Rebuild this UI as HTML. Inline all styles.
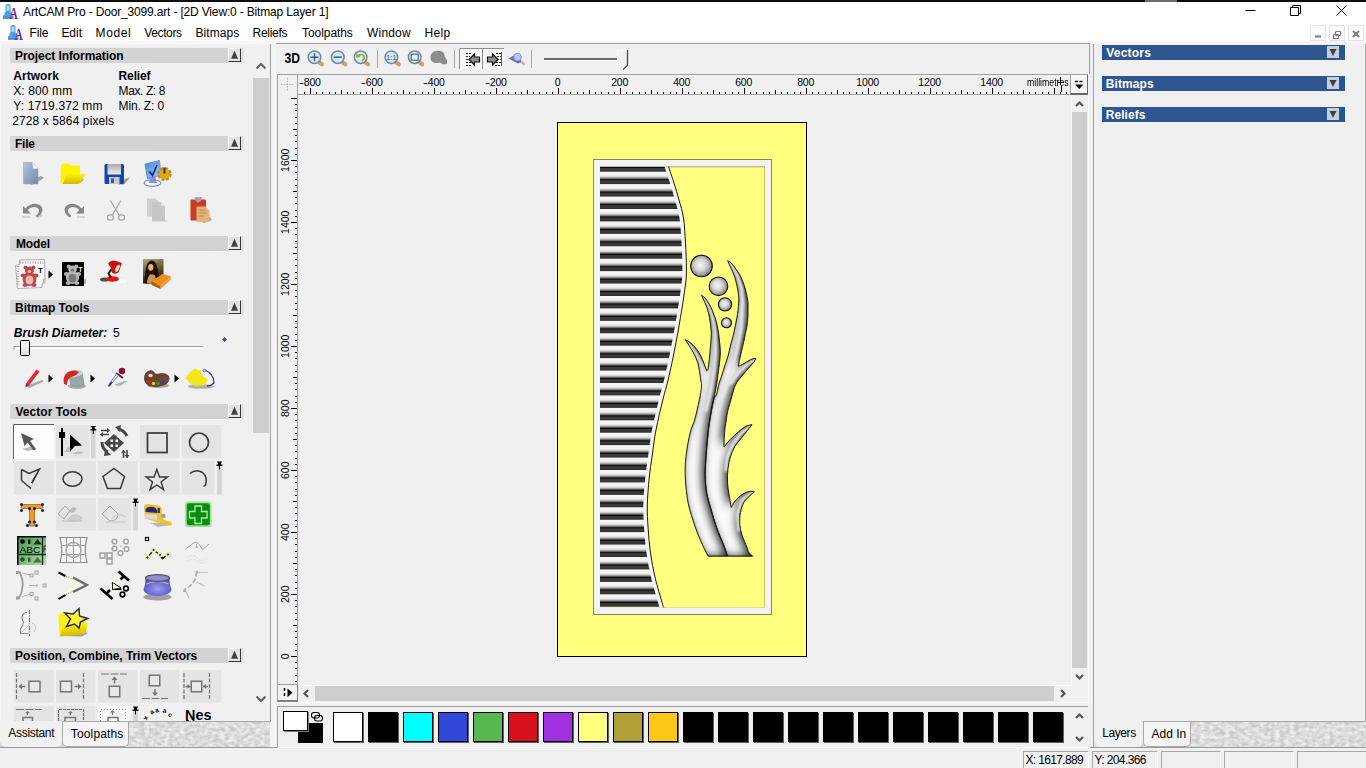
<!DOCTYPE html>
<html lang="en"><head><meta charset="utf-8"><title>ArtCAM Pro - Door_3099.art</title>
<style>
html,body{margin:0;padding:0;}
body{width:1366px;height:768px;overflow:hidden;background:#f0f0f0;position:relative;font-family:"Liberation Sans",sans-serif;font-size:12px;}
div,span.t,svg{position:absolute;}
svg{overflow:visible;}
span.t{white-space:pre;line-height:1;}
</style></head><body>
<div style="left:0px;top:0px;width:1366px;height:2px;background:#0c0c0c;"></div>
<div style="left:1145px;top:0px;width:32px;height:2px;background:#6a6a6a;"></div>
<div style="left:0px;top:2px;width:1366px;height:39px;background:#ffffff;"></div>
<div style="left:0px;top:41px;width:1366px;height:3px;background:#f6f6f6;"></div>
<span class="t" style="left:23.1px;top:6px;font-size:12px;color:#000;letter-spacing:-0.164px;">ArtCAM Pro - Door_3099.art - [2D View:0 - Bitmap Layer 1]</span>
<span class="t" style="left:29.6px;top:27px;font-size:12px;color:#000;letter-spacing:-0.167px;">File</span>
<span class="t" style="left:61.4px;top:27px;font-size:12px;color:#000;letter-spacing:-0.033px;">Edit</span>
<span class="t" style="left:95.6px;top:27px;font-size:12px;color:#000;letter-spacing:0.6px;">Model</span>
<span class="t" style="left:144.3px;top:27px;font-size:12px;color:#000;letter-spacing:-0.383px;">Vectors</span>
<span class="t" style="left:195.5px;top:27px;font-size:12px;color:#000;letter-spacing:0.067px;">Bitmaps</span>
<span class="t" style="left:252.5px;top:27px;font-size:12px;color:#000;letter-spacing:-0.283px;">Reliefs</span>
<span class="t" style="left:302.0px;top:27px;font-size:12px;color:#000;letter-spacing:-0.062px;">Toolpaths</span>
<span class="t" style="left:367.1px;top:27px;font-size:12px;color:#000;letter-spacing:0.16px;">Window</span>
<span class="t" style="left:424.6px;top:27px;font-size:12px;color:#000;letter-spacing:0.333px;">Help</span>
<svg style="left:0px;top:0px;" width="60" height="44" viewBox="0 0 60 44"><g transform="translate(2.5,3.2)"><path d="M3 1.500q2.500 -1.500 5 0v7.500h1.500v3h1.500v2h-10.500v-2h1.500v-3h1z" fill="#4c9ce4"/><path d="M4 2.500q1.500 -1 3 0v5h-3z" fill="#a8dcf8"/><path d="M0.500 14h10.500v1.500h-10.500z" fill="#2c6cc0"/><text x="7.200" y="15.800" font-size="17" font-weight="bold" font-family="Liberation Serif,serif" fill="#7c1c94" textLength="8" lengthAdjust="spacingAndGlyphs">A</text></g><g transform="translate(7.5,24.2)"><path d="M3 1.500q2.500 -1.500 5 0v7.500h1.500v3h1.500v2h-10.500v-2h1.500v-3h1z" fill="#4c9ce4"/><path d="M4 2.500q1.500 -1 3 0v5h-3z" fill="#a8dcf8"/><path d="M0.500 14h10.500v1.500h-10.500z" fill="#2c6cc0"/><text x="7.200" y="15.800" font-size="17" font-weight="bold" font-family="Liberation Serif,serif" fill="#7c1c94" textLength="8" lengthAdjust="spacingAndGlyphs">A</text></g></svg>
<svg style="left:1240px;top:2px;" width="126" height="20" viewBox="0 0 126 20"><path d="M5.5 8.5h10" stroke="#000" fill="none"/><path d="M50.5 5.5h8v8h-8zM52.5 5.5v-2h8v8h-2" stroke="#000" fill="none" transform="translate(0,0)"/><path d="M96.5 3.5l10 10M106.5 3.5l-10 10" stroke="#000" fill="none"/></svg>
<div style="left:1310px;top:25px;width:16px;height:16px;background:#fbfbfb;border:1px solid #e4e4e4;box-sizing:border-box;"></div>
<div style="left:1329px;top:25px;width:16px;height:16px;background:#fbfbfb;border:1px solid #e4e4e4;box-sizing:border-box;"></div>
<div style="left:1348px;top:25px;width:16px;height:16px;background:#fbfbfb;border:1px solid #e4e4e4;box-sizing:border-box;"></div>
<svg style="left:1310px;top:25px;" width="54" height="16" viewBox="0 0 54 16"><path d="M5 11.5h6" stroke="#7a7a7a" stroke-width="2" fill="none"/><path d="M25.5 6.5h5v4h-5zM23.5 9.5h5v4h-5z" stroke="#7a7a7a" stroke-width="1" fill="#fbfbfb"/><path d="M43 6l6 6M49 6l-6 6" stroke="#7a7a7a" stroke-width="2" fill="none"/></svg>
<div style="left:0px;top:44px;width:1px;height:703px;background:#fafafa;"></div>
<div style="left:270px;top:44px;width:1px;height:678px;background:#a0a0a0;"></div>
<div style="left:271px;top:44px;width:5px;height:704px;background:#f4f4f4;"></div>
<div style="left:10px;top:48px;width:218px;height:15px;background:linear-gradient(90deg,#dadada 0,#d3d3d3 8px,#d2d2d2 100%);"></div>
<div style="left:241px;top:48px;width:3px;height:15px;background:#e2e2e2;"></div>
<span class="t" style="left:15.1px;top:50px;font-size:12px;color:#000;font-weight:bold;letter-spacing:-0.083px;">Project Information</span>
<div style="left:228px;top:48px;width:13px;height:14px;background:#e2e2e2;border-right:1px solid #383838;border-bottom:1px solid #383838;border-left:1px solid #fff;border-top:1px solid #fff;box-sizing:border-box;"></div>
<div style="left:228px;top:62px;width:13px;height:1px;background:#e8e8e8;"></div>
<svg style="left:228px;top:48px;" width="13" height="14" viewBox="0 0 13 14"><path d="M6.500 2.800L3 10.700h7z" fill="#404040"/></svg>
<div style="left:10px;top:136px;width:218px;height:15px;background:linear-gradient(90deg,#dadada 0,#d3d3d3 8px,#d2d2d2 100%);"></div>
<div style="left:241px;top:136px;width:3px;height:15px;background:#e2e2e2;"></div>
<span class="t" style="left:14.9px;top:138px;font-size:12px;color:#000;font-weight:bold;letter-spacing:-0.2px;">File</span>
<div style="left:228px;top:136px;width:13px;height:14px;background:#e2e2e2;border-right:1px solid #383838;border-bottom:1px solid #383838;border-left:1px solid #fff;border-top:1px solid #fff;box-sizing:border-box;"></div>
<div style="left:228px;top:150px;width:13px;height:1px;background:#e8e8e8;"></div>
<svg style="left:228px;top:136px;" width="13" height="14" viewBox="0 0 13 14"><path d="M6.500 2.800L3 10.700h7z" fill="#404040"/></svg>
<div style="left:10px;top:236px;width:218px;height:15px;background:linear-gradient(90deg,#dadada 0,#d3d3d3 8px,#d2d2d2 100%);"></div>
<div style="left:241px;top:236px;width:3px;height:15px;background:#e2e2e2;"></div>
<span class="t" style="left:15.9px;top:238px;font-size:12px;color:#000;font-weight:bold;letter-spacing:-0.1px;">Model</span>
<div style="left:228px;top:236px;width:13px;height:14px;background:#e2e2e2;border-right:1px solid #383838;border-bottom:1px solid #383838;border-left:1px solid #fff;border-top:1px solid #fff;box-sizing:border-box;"></div>
<div style="left:228px;top:250px;width:13px;height:1px;background:#e8e8e8;"></div>
<svg style="left:228px;top:236px;" width="13" height="14" viewBox="0 0 13 14"><path d="M6.500 2.800L3 10.700h7z" fill="#404040"/></svg>
<div style="left:10px;top:300px;width:218px;height:15px;background:linear-gradient(90deg,#dadada 0,#d3d3d3 8px,#d2d2d2 100%);"></div>
<div style="left:241px;top:300px;width:3px;height:15px;background:#e2e2e2;"></div>
<span class="t" style="left:15.1px;top:302px;font-size:12px;color:#000;font-weight:bold;letter-spacing:-0.073px;">Bitmap Tools</span>
<div style="left:228px;top:300px;width:13px;height:14px;background:#e2e2e2;border-right:1px solid #383838;border-bottom:1px solid #383838;border-left:1px solid #fff;border-top:1px solid #fff;box-sizing:border-box;"></div>
<div style="left:228px;top:314px;width:13px;height:1px;background:#e8e8e8;"></div>
<svg style="left:228px;top:300px;" width="13" height="14" viewBox="0 0 13 14"><path d="M6.500 2.800L3 10.700h7z" fill="#404040"/></svg>
<div style="left:10px;top:404px;width:218px;height:15px;background:linear-gradient(90deg,#dadada 0,#d3d3d3 8px,#d2d2d2 100%);"></div>
<div style="left:241px;top:404px;width:3px;height:15px;background:#e2e2e2;"></div>
<span class="t" style="left:15.5px;top:406px;font-size:12px;color:#000;font-weight:bold;letter-spacing:0.027px;">Vector Tools</span>
<div style="left:228px;top:404px;width:13px;height:14px;background:#e2e2e2;border-right:1px solid #383838;border-bottom:1px solid #383838;border-left:1px solid #fff;border-top:1px solid #fff;box-sizing:border-box;"></div>
<div style="left:228px;top:418px;width:13px;height:1px;background:#e8e8e8;"></div>
<svg style="left:228px;top:404px;" width="13" height="14" viewBox="0 0 13 14"><path d="M6.500 2.800L3 10.700h7z" fill="#404040"/></svg>
<div style="left:10px;top:648px;width:218px;height:15px;background:linear-gradient(90deg,#dadada 0,#d3d3d3 8px,#d2d2d2 100%);"></div>
<div style="left:241px;top:648px;width:3px;height:15px;background:#e2e2e2;"></div>
<span class="t" style="left:15.1px;top:650px;font-size:12px;color:#000;font-weight:bold;letter-spacing:-0.063px;">Position, Combine, Trim Vectors</span>
<div style="left:228px;top:648px;width:13px;height:14px;background:#e2e2e2;border-right:1px solid #383838;border-bottom:1px solid #383838;border-left:1px solid #fff;border-top:1px solid #fff;box-sizing:border-box;"></div>
<div style="left:228px;top:662px;width:13px;height:1px;background:#e8e8e8;"></div>
<svg style="left:228px;top:648px;" width="13" height="14" viewBox="0 0 13 14"><path d="M6.500 2.800L3 10.700h7z" fill="#404040"/></svg>
<span class="t" style="left:13.2px;top:70px;font-size:12px;color:#000;font-weight:bold;letter-spacing:0.067px;">Artwork</span>
<span class="t" style="left:118.6px;top:70px;font-size:12px;color:#000;font-weight:bold;letter-spacing:-0.14px;">Relief</span>
<span class="t" style="left:13.2px;top:85px;font-size:12px;color:#000;letter-spacing:0.125px;">X: 800 mm</span>
<span class="t" style="left:118.6px;top:85px;font-size:12px;color:#000;letter-spacing:-0.4px;">Max. Z: 8</span>
<span class="t" style="left:13.2px;top:100px;font-size:12px;color:#000;letter-spacing:0.146px;">Y: 1719.372 mm</span>
<span class="t" style="left:118.6px;top:100px;font-size:12px;color:#000;letter-spacing:-0.15px;">Min. Z: 0</span>
<span class="t" style="left:12.2px;top:115px;font-size:12px;color:#000;letter-spacing:0.106px;">2728 x 5864 pixels</span>
<span class="t" style="left:13.8px;top:327px;font-size:12px;color:#000;font-weight:bold;font-style:italic;letter-spacing:0.007px;">Brush Diameter:</span>
<span class="t" style="left:113.0px;top:327px;font-size:12px;color:#000;transform:scaleX(1.0);transform-origin:0 0;">5</span>
<svg style="left:0;top:0" width="270" height="768" viewBox="0 0 270 768"><clipPath id="lpclip"><rect x="0" y="44" width="250" height="677"/></clipPath><g clip-path="url(#lpclip)"><defs><linearGradient id="gDoc" x1="0" y1="0" x2="1" y2="1"><stop offset="0" stop-color="#b4c4de"/><stop offset="1" stop-color="#7486a4"/></linearGradient><linearGradient id="gFold" x1="0" y1="0" x2="0" y2="1"><stop offset="0" stop-color="#fff400"/><stop offset="1" stop-color="#d4b800"/></linearGradient><linearGradient id="gLab" x1="0" y1="0" x2="0" y2="1"><stop offset="0" stop-color="#a8a8a8"/><stop offset="1" stop-color="#f0f0f0"/></linearGradient><linearGradient id="gMon" x1="0" y1="0" x2="1" y2="1"><stop offset="0" stop-color="#3c8ce0"/><stop offset="1" stop-color="#9cccf4"/></linearGradient><linearGradient id="gAbc" x1="0" y1="0" x2="1" y2="1"><stop offset="0" stop-color="#3c9440"/><stop offset="1" stop-color="#b8dcb8"/></linearGradient><linearGradient id="gThumb" x1="0" y1="0" x2="0" y2="1"><stop offset="0" stop-color="#fff"/><stop offset="1" stop-color="#dcdcdc"/></linearGradient><radialGradient id="gVes" cx="0.5" cy="0.6" r="0.6"><stop offset="0" stop-color="#9c9cf0"/><stop offset="1" stop-color="#5050c0"/></radialGradient><filter id="soft" x="-30%" y="-30%" width="160%" height="160%"><feGaussianBlur stdDeviation="0.6"/></filter></defs><path d="M27 182l14 -6l3 2l-12 7z" fill="#a0a0a0" filter="url(#soft)"/><path d="M23.500 162.500h9l5.500 6v15.500h-14.500z" fill="url(#gDoc)" stroke="#94a4c0" stroke-width="0.6"/><path d="M32.500 162.500l5.500 6h-4.500z" fill="#f4f6fa" stroke="#dfe4ee" stroke-width="0.500"/><path d="M66 184l18 -5l3 -3.500l-6 7z" fill="#9a9a9a" filter="url(#soft)"/><path d="M61 165.500l2 -2h6l2 2h9v9l-14 1l-4 8.500l-1.500 -2z" fill="#fff200"/><path d="M62.500 184l3.500 -8.500q1 -1.500 3 -1.500h16.500l-5 8.500q-1 1.500 -3 1.500z" fill="url(#gFold)"/><path d="M118 184.500l8 -6l4 -1l-6 7z" fill="#9c9c9c" filter="url(#soft)"/><rect x="104.500" y="164" width="19.500" height="20" rx="1.500" fill="#1444ac"/><rect x="107.500" y="164" width="13.500" height="10.500" fill="url(#gLab)"/><rect x="109" y="177" width="10.500" height="7" fill="#c4c8cc"/><rect x="111" y="178.500" width="3" height="4.500" fill="#2858b8"/><ellipse cx="152.500" cy="183" rx="8.500" ry="3.300" fill="#eef0fa" stroke="#6878b8" stroke-width="1"/><path d="M151 176l4 0l2 7h-8z" fill="#8890d8"/><path d="M145 164l14.500 -3.500l1.500 14.500l-13.500 4z" fill="url(#gMon)" stroke="#5c84c8" stroke-width="0.800"/><path d="M149.500 171.500l3 4l4.500 -10.500" fill="none" stroke="#1c1c70" stroke-width="1.600"/><circle cx="164.500" cy="174" r="5.600" fill="#d8a020" stroke="#c08810" stroke-width="3" stroke-dasharray="2.600 1.800"/><circle cx="164.500" cy="174" r="5" fill="#e0a820"/><path d="M164.500 167.500v6" stroke="#403020" stroke-width="2"/><path d="M23 213.500l0 -7.500l2.500 2.500q5 -5.500 11.500 -4.500q5.500 1.500 5.500 6q-0.500 4 -5 7.500l-2 -1.500q4 -3 3.500 -6q-1 -3 -5 -3q-3.500 0 -6.500 3l3.500 3.500z" fill="#868686"/><path d="M22 217h8M38 217l4 -2" stroke="#c8c8c8" stroke-width="1.500" fill="none"/><path d="M84 213.500l0 -7.500l-2.500 2.500q-5 -5.500 -11.500 -4.500q-5.500 1.500 -5.500 6q0.500 4 5 7.500l2 -1.500q-4 -3 -3.500 -6q1 -3 5 -3q3.500 0 6.500 3l-3.500 3.500z" fill="#868686"/><path d="M77 217h8" stroke="#c8c8c8" stroke-width="1.500" fill="none"/><path d="M110.500 200.500l9 15M121 200.500l-9 15" stroke="#a8a8a8" stroke-width="1.300" fill="none"/><ellipse cx="110.500" cy="217.500" rx="3" ry="2.600" fill="none" stroke="#a8a8a8" stroke-width="1.300"/><ellipse cx="121.500" cy="217.500" rx="3" ry="2.600" fill="none" stroke="#a8a8a8" stroke-width="1.300"/><path d="M147 198.500h8.500l3 3v15h-11.500z" fill="#cfcfcf"/><path d="M152 202h9l4 4v14l3.500 1.500h-16.500z" fill="#c6c6c6"/><path d="M161 202l4 4h-4z" fill="#e6e6e6"/><path d="M200 221l10 -4l2 3l-8 3z" fill="#a8a8a8" filter="url(#soft)"/><rect x="190.500" y="199.500" width="15.500" height="21" rx="1" fill="#cc3a20"/><path d="M194.500 197h7.500l-1 3.500l-2.800 2.500l-2.700 -2.500z" fill="#a4a0b8"/><path d="M196.500 206.500h9l4 4.500v11h-13z" fill="#e4b47c"/><path d="M199 210h6M199 213h7M199 216h5" stroke="#b88850" stroke-width="1"/><path d="M15.500 265.500l4 -1v-4.500l25 -0.500l0.500 23l-3 1v4l-24.500 1z" fill="#fdfdfd" stroke="#9a9a9a" stroke-width="0.800"/><path d="M20 262.500h24M18 266v20" stroke="#a8a8a8" stroke-width="2.500" stroke-dasharray="1 1.500" fill="none"/><path d="M43 279l3 -1l-3 6z" fill="#b0b0b0"/><ellipse cx="25.5" cy="267.5" rx="2.0" ry="2.0" fill="#c04848"/><ellipse cx="33.5" cy="267.5" rx="2.0" ry="2.0" fill="#c04848"/><ellipse cx="29.5" cy="270.5" rx="4.5" ry="4.0" fill="#c04848"/><ellipse cx="29.5" cy="279.0" rx="7.0" ry="7.0" fill="#c04848"/><ellipse cx="23.0" cy="275.5" rx="2.5" ry="2.0" fill="#c04848"/><ellipse cx="36.0" cy="275.5" rx="2.5" ry="2.0" fill="#c04848"/><ellipse cx="25.0" cy="285.0" rx="2.5" ry="2.0" fill="#c04848"/><ellipse cx="34.0" cy="285.0" rx="2.5" ry="2.0" fill="#c04848"/><ellipse cx="29.5" cy="280.0" rx="4.0" ry="4.5" fill="#f0b8b0"/><ellipse cx="29.5" cy="271.5" rx="1.8" ry="1.5" fill="#f0b8b0"/><text x="38" y="273" font-size="8" font-weight="bold" font-family="Liberation Sans,sans-serif" fill="#000">T</text><path d="M48.5 270.5L53.0 274.5L48.5 278.5Z" fill="#000"/><path d="M82 283l4 -5l0 6z" fill="#b0b0b0"/><rect x="62" y="262" width="22" height="24" fill="#000"/><ellipse cx="68.7" cy="266.4" rx="1.9" ry="1.9" fill="#b4b4b4"/><ellipse cx="76.3" cy="266.4" rx="1.9" ry="1.9" fill="#b4b4b4"/><ellipse cx="72.5" cy="269.3" rx="4.3" ry="3.8" fill="#b4b4b4"/><ellipse cx="72.5" cy="277.4" rx="6.6" ry="6.6" fill="#b4b4b4"/><ellipse cx="66.3" cy="274.0" rx="2.4" ry="1.9" fill="#b4b4b4"/><ellipse cx="78.7" cy="274.0" rx="2.4" ry="1.9" fill="#b4b4b4"/><ellipse cx="68.2" cy="283.1" rx="2.4" ry="1.9" fill="#b4b4b4"/><ellipse cx="76.8" cy="283.1" rx="2.4" ry="1.9" fill="#b4b4b4"/><ellipse cx="72.5" cy="278.3" rx="3.8" ry="4.3" fill="#787878"/><ellipse cx="72.5" cy="270.2" rx="1.7" ry="1.4" fill="#787878"/><text x="78" y="272" font-size="8" font-weight="bold" font-family="Liberation Sans,sans-serif" fill="#e0e0e0">T</text><ellipse cx="118" cy="281" rx="9" ry="2.600" fill="#fff" opacity="0.85" filter="url(#soft)"/><ellipse cx="104.500" cy="279.500" rx="4.500" ry="2" fill="#4a4a4a" filter="url(#soft)"/><ellipse cx="112.500" cy="279" rx="6.500" ry="2.800" fill="#e41414"/><path d="M111 277.500l-2.500 -4l3.500 -5" stroke="#3c0c0c" stroke-width="2" fill="none" stroke-linejoin="round"/><path d="M108 263.500q3 -4 8 -2.500l6 2l-3.500 9.500q-3 2 -6 0.500q-2 -2.500 -1.500 -5z" fill="#d01010"/><ellipse cx="117.500" cy="268.300" rx="1.700" ry="3.800" fill="#ffe8e0" transform="rotate(24 117.500 268.300)"/><linearGradient id="gMona" x1="0" y1="0" x2="0.300" y2="1"><stop offset="0" stop-color="#b8b078"/><stop offset="0.450" stop-color="#6c6838"/><stop offset="1" stop-color="#1c1808"/></linearGradient><rect x="143" y="259" width="20.500" height="24.500" fill="url(#gMona)"/><path d="M145 283.500q-1 -10 2 -19q2 -4 5 -4q4 1 5 6q2 8 4 17z" fill="#1c1006"/><ellipse cx="150.800" cy="267.300" rx="2.600" ry="3.400" fill="#e4b47c"/><path d="M147 283.500q0 -6 3 -9q3 -1 5 1q1 4 2 8z" fill="#c89458"/><path d="M151.600 281.200l11 -7.500l8.500 2.800l-10.500 9.500z" fill="#f08c1c"/><path d="M151.600 281.200l9 4.800l0 3l-9 -4z" fill="#b05c08"/><path d="M160.600 286l10.500 -9.500l-0.500 3.500l-10 9z" fill="#e8a050"/><rect x="13.500" y="346" width="190" height="1" fill="#a0a0a0"/><rect x="13.500" y="347" width="190" height="2" fill="#fff"/><rect x="13.500" y="346" width="1" height="4" fill="#a0a0a0"/><rect x="20.500" y="340.500" width="9" height="15" rx="1" fill="url(#gThumb)" stroke="#000" stroke-width="1"/><path d="M224.500 337l2.500 2.500l-2.500 2.500l-2.500 -2.500z" fill="#44506c"/><path d="M26 386l16 -6l1.500 1.500l-14 6.500z" fill="#a8a8a8" filter="url(#soft)"/><path d="M36.500 369.500l3 2l-10.500 14l-3.500 1.500l0.500 -3.500z" fill="#e42838"/><path d="M26 383.500l-0.500 3.500l3.500 -1.500z" fill="#604030"/><path d="M48.5 374.5L53.0 378.5L48.5 382.5Z" fill="#000"/><ellipse cx="77" cy="386" rx="9" ry="3" fill="#a8a8a8" filter="url(#soft)"/><path d="M68 373l14 -1l2 12q-6 4 -13 1z" fill="#9aa8a4" stroke="#7c8884" stroke-width="0.600"/><ellipse cx="75" cy="373.500" rx="7.500" ry="3.500" fill="#c8d0cc" transform="rotate(-8 75 373.500)"/><path d="M64 384q-2 -8 4 -12q6 -3 11 0q-3 4 -8 5q-4 2 -4 8z" fill="#d82424"/><path d="M90.5 374.5L95.0 378.5L90.5 382.5Z" fill="#000"/><path d="M114 385l10 -4l4 0l-8 5z" fill="#b0b0b0" filter="url(#soft)"/><circle cx="122" cy="371" r="3.300" fill="#8c1030"/><path d="M116 373l7 5" stroke="#503040" stroke-width="2"/><path d="M118.500 375.500l-8 9l-2 2l1 -3l7 -9.500z" fill="#e8ecf8" stroke="#5c64a0" stroke-width="0.800"/><path d="M112 382l-3 4" stroke="#2030b0" stroke-width="1.800"/><ellipse cx="158" cy="385.500" rx="11" ry="2.500" fill="#a8a8a8" filter="url(#soft)"/><path d="M144.500 380q-1 -8 6 -9.500q3 0 4 2.500q1 2 4 1q8 -2 10.500 3q1 5 -5 8q-8 3 -15 0.500q-4 -2 -4.500 -5.500z" fill="#6c4428" stroke="#402810" stroke-width="0.600"/><ellipse cx="150.500" cy="375.500" rx="2.200" ry="1.800" fill="#e8e0d8"/><circle cx="149" cy="382" r="1.700" fill="#e02020"/><circle cx="153.5" cy="383.5" r="1.700" fill="#f0c820"/><circle cx="158" cy="383.5" r="1.700" fill="#30a030"/><circle cx="162.5" cy="382.5" r="1.700" fill="#2040d0"/><circle cx="165.5" cy="379" r="1.700" fill="#8030c0"/><path d="M174.5 374.5L179.0 378.5L174.5 382.5Z" fill="#000"/><ellipse cx="201" cy="386.500" rx="13" ry="2.300" fill="#b0b0b0" filter="url(#soft)"/><path d="M204 370q10 3 10 13q-3 3 -7 3" fill="none" stroke="#2838a0" stroke-width="1.300"/><path d="M185.500 378l5 -6.500l4 -3l7 2.500l1 4.500l5.500 4l-3 5.500l-8 1l-6 -1.500z" fill="#f4e61c"/><circle cx="204.500" cy="370.500" r="1.300" fill="#fff" stroke="#2838a0" stroke-width="0.700"/><rect x="13" y="424" width="41" height="35" fill="#fdfdfd"/><path d="M13.500 459v-34.500h40.500" stroke="#606060" fill="none"/><rect x="56" y="425" width="33.5" height="33.5" fill="#e4e4e4"/><rect x="91" y="431" width="4.5" height="27.5" fill="#d4d4d4"/><path d="M90.8 426h5v1h-1v2h1.5v1.5h-2.5v3.5h-1v-3.5h-2.5v-1.500h1.5v-2h-1z" fill="#000"/><rect x="140" y="425" width="39.5" height="33.5" fill="#e4e4e4"/><rect x="182" y="425" width="39.5" height="33.5" fill="#e4e4e4"/><path d="M22 449l8 -2l6 2l-8 2z" fill="#b8b8b8" filter="url(#soft)"/><path d="M21 433l13 6l-4 2l6 8l-2.500 1.500l-6 -8l-3 3.500z" fill="#585858"/><path d="M64 452l5 -6l2 6zM72 453l8 -2l4 2l-8 1.500z" fill="#c0c0c0" filter="url(#soft)"/><path d="M62 428v28" stroke="#000" stroke-width="2"/><rect x="59" y="432" width="6" height="6" fill="#000"/><path d="M70 434.500l12 11l-7 0.500l-5 5.500z" fill="#000"/><path d="M114 434l10 9l-10 9l-10 -9z" fill="#484848"/><rect x="110.5" y="439.5" width="2.500" height="2.500" fill="#fff"/><rect x="115.5" y="439.5" width="2.500" height="2.500" fill="#fff"/><rect x="110.5" y="444.5" width="2.500" height="2.500" fill="#fff"/><rect x="115.5" y="444.5" width="2.500" height="2.500" fill="#fff"/><path d="M102 442q0 7 6 10" fill="none" stroke="#484848" stroke-width="3"/><path d="M105 449l6 6l-7 1z" fill="#484848"/><path d="M118 429q6 1 9 7" fill="none" stroke="#484848" stroke-width="3"/><path d="M115 427l6 -2l-1 7z" fill="#484848"/><path d="M101 430.500h8M101 434.500h8" stroke="#484848" stroke-width="1.600"/><path d="M107 428l3 2.500l-3 2.500zM103 432l-3 2.500l3 2.500z" fill="#484848"/><path d="M123.500 450v8M127 450v8" stroke="#484848" stroke-width="1.600"/><path d="M121 453l2.500 -3l2.500 3zM124.500 455l2.500 3l2.500 -3z" fill="#484848"/><path d="M150 448h19" stroke="#c4c4c4" stroke-width="2" filter="url(#soft)"/><rect x="147.500" y="433" width="19.500" height="19.500" fill="none" stroke="#383838" stroke-width="1.700"/><path d="M196 449.5h16" stroke="#c4c4c4" stroke-width="2" filter="url(#soft)"/><circle cx="199" cy="442.500" r="9.500" fill="none" stroke="#383838" stroke-width="1.700"/><rect x="14" y="461" width="40" height="33.5" fill="#e4e4e4"/><rect x="56" y="461" width="40" height="33.5" fill="#e4e4e4"/><rect x="98" y="461" width="39.5" height="33.5" fill="#e4e4e4"/><rect x="140" y="461" width="39.5" height="33.5" fill="#e4e4e4"/><rect x="182" y="461" width="32.5" height="33.5" fill="#e4e4e4"/><rect x="217.2" y="466" width="4.600000000000023" height="28.5" fill="#d4d4d4"/><path d="M217.0 461.5h5v1h-1v2h1.5v1.5h-2.5v3.5h-1v-3.5h-2.5v-1.500h1.5v-2h-1z" fill="#000"/><path d="M23 485h21" stroke="#c4c4c4" stroke-width="2" filter="url(#soft)"/><path d="M21.500 469.500l7.500 4l10.500 -4.500l-8 14M21.500 469.500v11l9.500 8" fill="none" stroke="#383838" stroke-width="1.500"/><path d="M38 473l-6 12l1 -6z" fill="#383838"/><path d="M66 486h18" stroke="#c4c4c4" stroke-width="2" filter="url(#soft)"/><ellipse cx="72.500" cy="479" rx="9.500" ry="7.300" fill="none" stroke="#383838" stroke-width="1.500"/><path d="M108 484h20" stroke="#c4c4c4" stroke-width="2" filter="url(#soft)"/><path d="M114 468.500l10.500 8l-4 12h-13l-4.500 -12z" fill="none" stroke="#383838" stroke-width="1.500"/><path d="M160 485h12" stroke="#c4c4c4" stroke-width="2" filter="url(#soft)"/><path d="M156.800 469.500l2.700 7.500h8l-6.400 5l2.500 7.700l-6.800 -4.700l-6.800 4.700l2.500 -7.700l-6.400 -5h8z" fill="none" stroke="#383838" stroke-width="1.400"/><path d="M193 485h12" stroke="#c4c4c4" stroke-width="2" filter="url(#soft)"/><path d="M190 473.500q6 -5 12.500 -1q5.500 4.500 3 12.500l-2 1.500" fill="none" stroke="#383838" stroke-width="1.500"/><rect x="56" y="498" width="40" height="32.5" fill="#e4e4e4"/><rect x="98" y="498" width="33" height="32.5" fill="#e4e4e4"/><rect x="133.2" y="503" width="4.600000000000023" height="27.5" fill="#d4d4d4"/><path d="M133.0 498.5h5v1h-1v2h1.5v1.5h-2.5v3.5h-1v-3.5h-2.5v-1.500h1.5v-2h-1z" fill="#000"/><path d="M23 520h23" stroke="#b0b0b0" stroke-width="2" filter="url(#soft)"/><path d="M21.500 504.500h21v4h-8v17.500h-5v-17.500h-8z" fill="#e89c24" stroke="#a86410" stroke-width="0.800"/><circle cx="21.5" cy="504.5" r="1.500" fill="#181860"/><circle cx="42.5" cy="504.5" r="1.500" fill="#181860"/><circle cx="21.5" cy="510.5" r="1.500" fill="#181860"/><circle cx="42.5" cy="510.5" r="1.500" fill="#181860"/><circle cx="27.5" cy="525.5" r="1.500" fill="#181860"/><circle cx="36.5" cy="525.5" r="1.500" fill="#181860"/><circle cx="29.5" cy="508.5" r="1.500" fill="#181860"/><circle cx="34.5" cy="508.5" r="1.500" fill="#181860"/><circle cx="29.5" cy="522" r="1.500" fill="#181860"/><circle cx="34.5" cy="522" r="1.500" fill="#181860"/><path d="M58 514l7 -8l5 5l-6 8z" fill="none" stroke="#a4a4a4" stroke-width="1"/><ellipse cx="73" cy="510" rx="3.500" ry="2.200" fill="#b8b8b8" transform="rotate(-35 73 510)"/><path d="M68 520q6 -9 14 -2q-5 5 -14 2z" fill="#d0d0d0" stroke="#b8b8b8" stroke-width="0.800"/><path d="M62 521h20" stroke="#c4c4c4" stroke-width="1.500"/><path d="M102 514l8 -8l8 8q0 7 -8 7z" fill="none" stroke="#a8a8a8" stroke-width="1"/><path d="M112 519q6 -8 14 -2" fill="none" stroke="#d0d0d0" stroke-width="1.500"/><path d="M106 522h20" stroke="#d0d0d0" stroke-width="1.500"/><path d="M150 523l20 -1l2 3l-14 2z" fill="#b8b8b8" filter="url(#soft)"/><path d="M144 507q0 -3 4 -3l10 1.500q4 1 4 6l1 8l9 3l-1 3l-12 -3l-14 -4z" fill="#ecc424"/><path d="M145.500 509q2 -3 8 -2q4 1.500 4 6l-12 -1z" fill="#282870"/><path d="M145 514l12 1l0 5l-12 -2z" fill="#d8d8e8"/><circle cx="163.500" cy="516" r="2.300" fill="#9c9cb0"/><path d="M157.500 508l2.500 0l0 5l-2.500 0z" fill="#383890"/><rect x="185" y="501.500" width="26.500" height="25.500" rx="2.500" fill="#98e498"/><rect x="186.800" y="503.300" width="23" height="22" rx="2" fill="#0c8c0c"/><path d="M195 506h6.500v5.500h5.500v6.500h-5.500v5.500h-6.500v-5.500h-5.500v-6.500h5.500z" fill="#0c8c0c" stroke="#a8f0a8" stroke-width="1.300"/><rect x="17" y="536" width="29" height="29" fill="url(#gAbc)"/><path d="M17 536.800h29M17.800 536v29" stroke="#000" stroke-width="1.600" fill="none"/><path d="M17 554.500h29M42.500 536v29" stroke="#103010" stroke-width="1.300" fill="none"/><circle cx="22.500" cy="541.500" r="2.300" fill="#000"/><rect x="28" y="539.500" width="2.500" height="4.500" fill="#102810"/><path d="M33 544.500l4.500 -5.500l4.500 5.500z" fill="#183018"/><text x="19.500" y="552.500" font-size="8.500" font-family="Liberation Sans,sans-serif" fill="#000" textLength="21" lengthAdjust="spacingAndGlyphs">ABC</text><path d="M44 546v6.500M44 546h2M44 549h2" stroke="#103010" stroke-width="1" fill="none"/><circle cx="22.500" cy="559.500" r="2.300" fill="#285028"/><rect x="28" y="557.500" width="2.500" height="4.500" fill="#386038"/><path d="M33 562.500l4.500 -5.500l4.500 5.500z" fill="#487048"/><path d="M60 537.500h27q-3.500 12.500 0 25h-27q3.500 -12.500 0 -25z" fill="#f4f4f4" stroke="#8c8c8c" stroke-width="1.200"/><path d="M66.500 537.500v25M73.500 537.500v25M80.500 537.500v25M61.500 545.500h24M61.500 554.500h24" stroke="#9c9c9c" stroke-width="1" fill="none"/><circle cx="73.500" cy="550" r="7.500" fill="none" stroke="#a8a8a8" stroke-width="1.500"/><rect x="100.0" y="553.0" width="5" height="5" fill="#fff" stroke="#a4a4a4" stroke-width="1.600"/><rect x="107.0" y="553.0" width="5" height="5" fill="#fff" stroke="#a4a4a4" stroke-width="1.600"/><rect x="107.0" y="559.0" width="5" height="5" fill="#fff" stroke="#a4a4a4" stroke-width="1.600"/><circle cx="114.5" cy="541.5" r="2.300" fill="#fff" stroke="#a4a4a4" stroke-width="1.600"/><circle cx="114.5" cy="548.5" r="2.300" fill="#fff" stroke="#a4a4a4" stroke-width="1.600"/><circle cx="120.5" cy="553" r="2.300" fill="#fff" stroke="#a4a4a4" stroke-width="1.600"/><circle cx="126" cy="541.5" r="2.300" fill="#fff" stroke="#a4a4a4" stroke-width="1.600"/><circle cx="126.5" cy="549" r="2.300" fill="#fff" stroke="#a4a4a4" stroke-width="1.600"/><circle cx="121" cy="546" r="0.800" fill="#a4a4a4"/><rect x="145.500" y="537.500" width="3" height="3" fill="#fff" stroke="#000" stroke-width="1.200"/><path d="M147.500 557.500l6 -7.500l6.500 5l2.500 3.500l5.500 -4" fill="none" stroke="#181818" stroke-width="1.500"/><circle cx="147.5" cy="557.5" r="2.600" fill="#f8f8c0" stroke="#e0e0a0" stroke-width="0.600"/><path d="M146.3 557.5h2.400M147.5 556.3v2.400" stroke="#202010" stroke-width="0.900"/><circle cx="153.5" cy="550" r="2.600" fill="#f8f8c0" stroke="#e0e0a0" stroke-width="0.600"/><path d="M152.3 550h2.400M153.5 548.8v2.400" stroke="#202010" stroke-width="0.900"/><circle cx="160" cy="555" r="2.600" fill="#f8f8c0" stroke="#e0e0a0" stroke-width="0.600"/><path d="M158.8 555h2.400M160 553.8v2.400" stroke="#202010" stroke-width="0.900"/><circle cx="168" cy="554.5" r="2.600" fill="#f8f8c0" stroke="#e0e0a0" stroke-width="0.600"/><path d="M166.8 554.5h2.400M168 553.3v2.400" stroke="#202010" stroke-width="0.900"/><path d="M160.500 557l2 2.500l2 -2.500z" fill="#101010"/><path d="M185.500 549l9 -6.500q2 -1 4 1l4 6l6.500 -5.500" fill="none" stroke="#a0a0a0" stroke-width="1"/><path d="M196.500 544v4l-1 -1.500m1 1.500l1 -1.500" fill="none" stroke="#a0a0a0" stroke-width="0.800"/><path d="M187 558q5 -5 10 0t10 0M187 561q5 -4 10 0t10 0" fill="none" stroke="#dcdcdc" stroke-width="1" stroke-dasharray="2 1.500"/><path d="M16.500 572.500h3.500q6 13 -1 25.500h-3" fill="none" stroke="#9c9c9c" stroke-width="1.800"/><rect x="16" y="571" width="3.500" height="3" fill="#9c9c9c"/><rect x="16" y="596.500" width="3.500" height="3" fill="#9c9c9c"/><path d="M22 573l8 2M22 597l8 -3M29 585.500h9" fill="none" stroke="#b0b0b0" stroke-width="1"/><path d="M36 584l3 1.500l-3 1.500z" fill="#b0b0b0"/><rect x="30.0" y="574.0" width="3" height="3" fill="#e8e8e8" stroke="#a4a4a4" stroke-width="1"/><rect x="35.0" y="571.0" width="3" height="3" fill="#e8e8e8" stroke="#a4a4a4" stroke-width="1"/><rect x="30.0" y="592.5" width="3" height="3" fill="#e8e8e8" stroke="#a4a4a4" stroke-width="1"/><rect x="35.0" y="597.0" width="3" height="3" fill="#e8e8e8" stroke="#a4a4a4" stroke-width="1"/><rect x="43.0" y="584.0" width="3" height="3" fill="#e8e8e8" stroke="#a4a4a4" stroke-width="1"/><path d="M66 576.500l8 6.500v5l-8 6" fill="none" stroke="#f8f8c4" stroke-width="2.500"/><path d="M58.500 572.500l7 3.500M58.500 599l7 -4" stroke="#000" stroke-width="2" fill="none"/><path d="M73 577.500l14 7.500l-14 7" fill="none" stroke="#686868" stroke-width="2.200"/><path d="M66 576.500l7 3M66 594.500l7 -3" stroke="#606020" stroke-width="0.800" stroke-dasharray="1 1.500" fill="none"/><path d="M106 593l17 -17" stroke="#f8f8c4" stroke-width="3"/><path d="M118.500 571.500l10.500 9M124 576l-3.500 3.500M100.500 588.500l12 10.500M106.500 593.500l3.500 -3.500" stroke="#000" stroke-width="2.600" fill="none"/><path d="M112 583l9 5.500M112.500 589.500h9" stroke="#000" stroke-width="1.200" fill="none"/><path d="M112.500 582.500l8.500 5.500l-8.500 1.500z" fill="#fff" stroke="#000" stroke-width="0.900"/><circle cx="126" cy="588.500" r="2.300" fill="#fff" stroke="#000" stroke-width="1.700"/><circle cx="122.500" cy="594.500" r="2.300" fill="#fff" stroke="#000" stroke-width="1.700"/><ellipse cx="157.500" cy="597" rx="14" ry="3.500" fill="#a0a0a0" filter="url(#soft)"/><path d="M145.500 578q0 7 -2 11q0 6 14 7q14 -1 14 -7q-2 -4 -2 -11z" fill="url(#gVes)"/><path d="M146.500 584q11 -5 22 0" fill="none" stroke="#d0d090" stroke-width="1.200"/><ellipse cx="157.500" cy="578" rx="12" ry="3.300" fill="#8c8cd8" stroke="#585858" stroke-width="1.200"/><path d="M196.500 571.500q0 12 -12 18" fill="none" stroke="#a8a8a8" stroke-width="1.500" stroke-dasharray="5 2"/><path d="M199 572.500h9M197 582l7 4M185 590l4 8" fill="none" stroke="#c0c0c0" stroke-width="1.200"/><circle cx="197" cy="572" r="1.500" fill="#b0b0b0"/><path d="M184 588l2 4l-3 0z" fill="#a8a8a8"/><path d="M27 612.500q-4 0 -5 4.500q0 3 1.500 5q-1 5 -3 7l0 4.500h8" fill="none" stroke="#8c8c8c" stroke-width="1.200"/><path d="M29.500 610v26" stroke="#7c7c7c" stroke-width="1.200" stroke-dasharray="4 1.500 1 1.500"/><path d="M21 633l9 -9M32 623q6 2 2 9" fill="none" stroke="#c4c4c4" stroke-width="1"/><path d="M62 636l22 -4l4 1l-6 3.500z" fill="#a0a0a0" filter="url(#soft)"/><path d="M58.500 617q1 -4 6 -5l14 3l8 10l-4 2l-23 9z" fill="#f8f010"/><path d="M60 636.500l2 -8q1 -2.500 4 -3l21.500 -2.500l-1.500 9q-1 2 -4 2.500z" fill="url(#gFold)"/><path d="M79 608.500l0.500 7.500l8 2.500l-7 3.500l-1.500 6l-4.500 -4l-8 2.500l4 -7.500l-5.500 -6l8 1z" fill="#fff830" stroke="#282850" stroke-width="1.500" stroke-linejoin="miter"/><rect x="14" y="670" width="40" height="32.5" fill="#e4e4e4"/><rect x="56" y="670" width="39.5" height="32.5" fill="#e4e4e4"/><rect x="98" y="670" width="39.5" height="32.5" fill="#e4e4e4"/><rect x="140" y="670" width="39.5" height="32.5" fill="#e4e4e4"/><rect x="182" y="670" width="39.5" height="32.5" fill="#e4e4e4"/><path d="M20 690h24" stroke="#d0d0d0" stroke-width="2" filter="url(#soft)"/><path d="M16.500 673v26" stroke="#747474" stroke-width="1.200" stroke-dasharray="4 1.500"/><path d="M19.500 686.500h6" stroke="#747474" stroke-width="1.500"/><path d="M22 683.500l-3.500 3l3.500 3z" fill="#747474"/><rect x="29.0" y="681.25" width="11" height="10.5" fill="#e8e8e8" stroke="#747474" stroke-width="1.500"/><path d="M62 690h20" stroke="#d0d0d0" stroke-width="2" filter="url(#soft)"/><path d="M83.500 673v26" stroke="#747474" stroke-width="1.200" stroke-dasharray="4 1.500"/><path d="M74.500 686.500h6" stroke="#747474" stroke-width="1.500"/><path d="M78 683.500l3.500 3l-3.500 3z" fill="#747474"/><rect x="60.5" y="681.25" width="11" height="10.5" fill="#e8e8e8" stroke="#747474" stroke-width="1.500"/><path d="M106 691h22" stroke="#d0d0d0" stroke-width="2" filter="url(#soft)"/><path d="M101 674h26" stroke="#747474" stroke-width="1.200" stroke-dasharray="8 1.500"/><path d="M114.500 677.500v6" stroke="#747474" stroke-width="1.500"/><path d="M111.500 680l3 -3.500l3 3.500z" fill="#747474"/><rect x="109.25" y="686.25" width="10.5" height="10.5" fill="#e8e8e8" stroke="#747474" stroke-width="1.500"/><path d="M156 689h10" stroke="#d0d0d0" stroke-width="2" filter="url(#soft)"/><path d="M142 698.500h26" stroke="#747474" stroke-width="1.200" stroke-dasharray="8 1.500"/><path d="M155 689v6" stroke="#747474" stroke-width="1.500"/><path d="M152 692.500l3 3.500l3 -3.500z" fill="#747474"/><rect x="149.25" y="675.25" width="10.5" height="10.5" fill="#e8e8e8" stroke="#747474" stroke-width="1.500"/><path d="M188 694h22" stroke="#d0d0d0" stroke-width="2" filter="url(#soft)"/><path d="M184 673v26M209.500 673v26" stroke="#747474" stroke-width="1.200" stroke-dasharray="4 1.500"/><path d="M185.500 686.500h5M203 686.500h5" stroke="#747474" stroke-width="1.500"/><path d="M187.500 684l2.500 2.500l-2.500 2.500zM206 684l-2.500 2.500l2.500 2.500z" fill="#747474"/><rect x="191.25" y="681.25" width="10.5" height="10.5" fill="#e8e8e8" stroke="#747474" stroke-width="1.500"/><rect x="14" y="706" width="40" height="15" fill="#e4e4e4"/><rect x="56" y="706" width="39.5" height="15" fill="#e4e4e4"/><rect x="98" y="706" width="32.5" height="15" fill="#f6f6f6"/><rect x="133.2" y="711" width="4.600000000000023" height="10" fill="#d4d4d4"/><path d="M133.0 706.5h5v1h-1v2h1.5v1.5h-2.5v3.5h-1v-3.5h-2.5v-1.500h1.5v-2h-1z" fill="#000"/><path d="M16 709.500h26" stroke="#747474" stroke-width="1.200" stroke-dasharray="8 1.500"/><path d="M27.500 711l-2.500 2h5z" fill="#747474"/><path d="M27.500 712v3" stroke="#747474" stroke-width="1.500"/><path d="M23 721v-3.500h9.500v3.500" fill="none" stroke="#747474" stroke-width="1.500"/><path d="M58.500 721v-11.500h25v11.500" fill="none" stroke="#747474" stroke-width="1.200" stroke-dasharray="3 1"/><path d="M70.500 711l-2.500 2h5z" fill="#747474"/><path d="M70.500 712v3" stroke="#747474" stroke-width="1.500"/><path d="M65 721v-3.500h10.500v3.500" fill="none" stroke="#747474" stroke-width="1.500"/><path d="M100.500 721v-11.500h25v11.500" fill="none" stroke="#909090" stroke-width="1" stroke-dasharray="1 2"/><path d="M112.500 710l-2.500 2.500h5z" fill="#747474"/><path d="M112.500 712v3" stroke="#747474" stroke-width="1.200"/><path d="M108 721v-3.500h10v3.500" fill="none" stroke="#747474" stroke-width="1.500"/><text x="146.5" y="720.5" font-size="6.500" font-weight="bold" font-family="Liberation Sans,sans-serif" fill="#000" transform="rotate(-60 146.5 720.5)">x</text><text x="151.5" y="714.8" font-size="6.500" font-weight="bold" font-family="Liberation Sans,sans-serif" fill="#000" transform="rotate(-35 151.5 714.8)">a</text><text x="155.8" y="712.8" font-size="6.500" font-weight="bold" font-family="Liberation Sans,sans-serif" fill="#000" transform="rotate(-18 155.8 712.8)">a</text><text x="162.5" y="712.5" font-size="6.500" font-weight="bold" font-family="Liberation Sans,sans-serif" fill="#000" transform="rotate(10 162.5 712.5)">a</text><text x="167.5" y="715.5" font-size="6.500" font-weight="bold" font-family="Liberation Sans,sans-serif" fill="#000" transform="rotate(35 167.5 715.5)">c</text><text x="185" y="720.300" font-size="14.500" font-weight="bold" font-family="Liberation Sans,sans-serif" fill="#000" textLength="26.500" lengthAdjust="spacingAndGlyphs">Nes</text><text x="185" y="729.500" font-size="14.500" font-weight="bold" font-family="Liberation Sans,sans-serif" fill="#000" textLength="26.500" lengthAdjust="spacingAndGlyphs">Nes</text></g></svg>
<div style="left:253px;top:78px;width:16px;height:355px;background:#cdcdcd;"></div>
<svg style="left:253px;top:58px;" width="16" height="16" viewBox="0 0 16 16"><path d="M3.5 10.5L8 6l4.500 4.500" stroke="#606060" stroke-width="2" fill="none"/></svg>
<svg style="left:253px;top:691px;" width="16" height="16" viewBox="0 0 16 16"><path d="M3.5 5.5L8 10l4.500 -4.500" stroke="#606060" stroke-width="2" fill="none"/></svg>
<svg style="left:0px;top:0px;" width="1366" height="768" viewBox="0 0 1366 768"><defs><filter id="tx" x="0" y="0" width="100%" height="100%" color-interpolation-filters="sRGB"><feTurbulence type="fractalNoise" baseFrequency="0.22 0.3" numOctaves="2" seed="7"/><feColorMatrix type="matrix" values="0 0 0 0 0.835  0 0 0 0 0.835  0 0 0 0 0.835  0.55 0.55 0 0 -0.32"/></filter></defs><rect x="0" y="721" width="270" height="26" fill="#cacaca"/><rect x="0" y="721" width="270" height="26" fill="#ececec" filter="url(#tx2)"/><rect x="1094" y="721" width="272" height="26" fill="#cacaca"/><defs><filter id="tx2" x="0" y="0" width="100%" height="100%" color-interpolation-filters="sRGB"><feTurbulence type="fractalNoise" baseFrequency="0.2 0.28" numOctaves="2" seed="3" result="n"/><feColorMatrix in="n" type="matrix" values="0 0 0 0 0.93  0 0 0 0 0.93  0 0 0 0 0.93  1.6 1.6 0 0 -1.1"/></filter></defs><rect x="1094" y="721" width="272" height="26" fill="#ececec" filter="url(#tx2)"/></svg>
<div style="left:0px;top:721px;width:62px;height:26px;background:#f0f0f0;border-radius:0 0 6px 6px;"></div>
<div style="left:62px;top:722px;width:67px;height:25px;background:#f4f4f4;border:1px solid #a8a8a8;border-top:none;border-radius:0 0 5px 5px;box-sizing:border-box;"></div>
<span class="t" style="left:8.3px;top:727px;font-size:12px;color:#000;letter-spacing:-0.3px;">Assistant</span>
<span class="t" style="left:70.8px;top:728px;font-size:12px;color:#000;letter-spacing:0.15px;">Toolpaths</span>
<div style="left:62px;top:721px;width:208px;height:1px;background:#a8a8a8;"></div>
<div style="left:0px;top:747px;width:277px;height:1px;background:#9a9a9a;"></div>
<div style="left:276px;top:43px;width:814px;height:1px;background:#a0a0a0;"></div>
<div style="left:1089px;top:43px;width:1px;height:31px;background:#a0a0a0;"></div>
<div style="left:1088px;top:95px;width:1px;height:608px;background:#fcfcfc;"></div>
<div style="left:277px;top:702px;width:812px;height:1px;background:#fcfcfc;"></div>
<div style="left:298px;top:685px;width:774px;height:1px;background:#fafafa;"></div>
<div style="left:1071px;top:95px;width:1px;height:591px;background:#fafafa;"></div>
<div style="left:277px;top:74px;width:794px;height:21px;background:#f0f0f0;border:1px solid #a0a0a0;box-sizing:border-box;"></div>
<div style="left:277px;top:74px;width:21px;height:21px;background:#f0f0f0;border:1px solid #a0a0a0;box-sizing:border-box;"></div>
<div style="left:277px;top:94px;width:21px;height:591px;background:#f0f0f0;border:1px solid #a0a0a0;border-top:none;box-sizing:border-box;"></div>
<svg style="left:0px;top:0px;" width="1366" height="768" viewBox="0 0 1366 768"><rect x="304" y="92" width="1" height="2" fill="#000"/><rect x="310" y="88" width="1" height="6" fill="#000"/><rect x="316" y="92" width="1" height="2" fill="#000"/><rect x="322" y="92" width="1" height="2" fill="#000"/><rect x="329" y="92" width="1" height="2" fill="#000"/><rect x="335" y="92" width="1" height="2" fill="#000"/><rect x="341" y="90" width="1" height="4" fill="#000"/><rect x="347" y="92" width="1" height="2" fill="#000"/><rect x="353" y="92" width="1" height="2" fill="#000"/><rect x="360" y="92" width="1" height="2" fill="#000"/><rect x="366" y="92" width="1" height="2" fill="#000"/><rect x="372" y="88" width="1" height="6" fill="#000"/><rect x="378" y="92" width="1" height="2" fill="#000"/><rect x="384" y="92" width="1" height="2" fill="#000"/><rect x="391" y="92" width="1" height="2" fill="#000"/><rect x="397" y="92" width="1" height="2" fill="#000"/><rect x="403" y="90" width="1" height="4" fill="#000"/><rect x="409" y="92" width="1" height="2" fill="#000"/><rect x="415" y="92" width="1" height="2" fill="#000"/><rect x="422" y="92" width="1" height="2" fill="#000"/><rect x="428" y="92" width="1" height="2" fill="#000"/><rect x="434" y="88" width="1" height="6" fill="#000"/><rect x="440" y="92" width="1" height="2" fill="#000"/><rect x="446" y="92" width="1" height="2" fill="#000"/><rect x="453" y="92" width="1" height="2" fill="#000"/><rect x="459" y="92" width="1" height="2" fill="#000"/><rect x="465" y="90" width="1" height="4" fill="#000"/><rect x="471" y="92" width="1" height="2" fill="#000"/><rect x="477" y="92" width="1" height="2" fill="#000"/><rect x="484" y="92" width="1" height="2" fill="#000"/><rect x="490" y="92" width="1" height="2" fill="#000"/><rect x="496" y="88" width="1" height="6" fill="#000"/><rect x="502" y="92" width="1" height="2" fill="#000"/><rect x="508" y="92" width="1" height="2" fill="#000"/><rect x="515" y="92" width="1" height="2" fill="#000"/><rect x="521" y="92" width="1" height="2" fill="#000"/><rect x="527" y="90" width="1" height="4" fill="#000"/><rect x="533" y="92" width="1" height="2" fill="#000"/><rect x="539" y="92" width="1" height="2" fill="#000"/><rect x="546" y="92" width="1" height="2" fill="#000"/><rect x="552" y="92" width="1" height="2" fill="#000"/><rect x="558" y="88" width="1" height="6" fill="#000"/><rect x="564" y="92" width="1" height="2" fill="#000"/><rect x="570" y="92" width="1" height="2" fill="#000"/><rect x="577" y="92" width="1" height="2" fill="#000"/><rect x="583" y="92" width="1" height="2" fill="#000"/><rect x="589" y="90" width="1" height="4" fill="#000"/><rect x="595" y="92" width="1" height="2" fill="#000"/><rect x="601" y="92" width="1" height="2" fill="#000"/><rect x="608" y="92" width="1" height="2" fill="#000"/><rect x="614" y="92" width="1" height="2" fill="#000"/><rect x="620" y="88" width="1" height="6" fill="#000"/><rect x="626" y="92" width="1" height="2" fill="#000"/><rect x="632" y="92" width="1" height="2" fill="#000"/><rect x="639" y="92" width="1" height="2" fill="#000"/><rect x="645" y="92" width="1" height="2" fill="#000"/><rect x="651" y="90" width="1" height="4" fill="#000"/><rect x="657" y="92" width="1" height="2" fill="#000"/><rect x="663" y="92" width="1" height="2" fill="#000"/><rect x="670" y="92" width="1" height="2" fill="#000"/><rect x="676" y="92" width="1" height="2" fill="#000"/><rect x="682" y="88" width="1" height="6" fill="#000"/><rect x="688" y="92" width="1" height="2" fill="#000"/><rect x="694" y="92" width="1" height="2" fill="#000"/><rect x="701" y="92" width="1" height="2" fill="#000"/><rect x="707" y="92" width="1" height="2" fill="#000"/><rect x="713" y="90" width="1" height="4" fill="#000"/><rect x="719" y="92" width="1" height="2" fill="#000"/><rect x="725" y="92" width="1" height="2" fill="#000"/><rect x="732" y="92" width="1" height="2" fill="#000"/><rect x="738" y="92" width="1" height="2" fill="#000"/><rect x="744" y="88" width="1" height="6" fill="#000"/><rect x="750" y="92" width="1" height="2" fill="#000"/><rect x="756" y="92" width="1" height="2" fill="#000"/><rect x="763" y="92" width="1" height="2" fill="#000"/><rect x="769" y="92" width="1" height="2" fill="#000"/><rect x="775" y="90" width="1" height="4" fill="#000"/><rect x="781" y="92" width="1" height="2" fill="#000"/><rect x="787" y="92" width="1" height="2" fill="#000"/><rect x="794" y="92" width="1" height="2" fill="#000"/><rect x="800" y="92" width="1" height="2" fill="#000"/><rect x="806" y="88" width="1" height="6" fill="#000"/><rect x="812" y="92" width="1" height="2" fill="#000"/><rect x="818" y="92" width="1" height="2" fill="#000"/><rect x="825" y="92" width="1" height="2" fill="#000"/><rect x="831" y="92" width="1" height="2" fill="#000"/><rect x="837" y="90" width="1" height="4" fill="#000"/><rect x="843" y="92" width="1" height="2" fill="#000"/><rect x="849" y="92" width="1" height="2" fill="#000"/><rect x="856" y="92" width="1" height="2" fill="#000"/><rect x="862" y="92" width="1" height="2" fill="#000"/><rect x="868" y="88" width="1" height="6" fill="#000"/><rect x="874" y="92" width="1" height="2" fill="#000"/><rect x="880" y="92" width="1" height="2" fill="#000"/><rect x="887" y="92" width="1" height="2" fill="#000"/><rect x="893" y="92" width="1" height="2" fill="#000"/><rect x="899" y="90" width="1" height="4" fill="#000"/><rect x="905" y="92" width="1" height="2" fill="#000"/><rect x="911" y="92" width="1" height="2" fill="#000"/><rect x="918" y="92" width="1" height="2" fill="#000"/><rect x="924" y="92" width="1" height="2" fill="#000"/><rect x="930" y="88" width="1" height="6" fill="#000"/><rect x="936" y="92" width="1" height="2" fill="#000"/><rect x="942" y="92" width="1" height="2" fill="#000"/><rect x="949" y="92" width="1" height="2" fill="#000"/><rect x="955" y="92" width="1" height="2" fill="#000"/><rect x="961" y="90" width="1" height="4" fill="#000"/><rect x="967" y="92" width="1" height="2" fill="#000"/><rect x="973" y="92" width="1" height="2" fill="#000"/><rect x="980" y="92" width="1" height="2" fill="#000"/><rect x="986" y="92" width="1" height="2" fill="#000"/><rect x="992" y="88" width="1" height="6" fill="#000"/><rect x="998" y="92" width="1" height="2" fill="#000"/><rect x="1004" y="92" width="1" height="2" fill="#000"/><rect x="1011" y="92" width="1" height="2" fill="#000"/><rect x="1017" y="92" width="1" height="2" fill="#000"/><rect x="1023" y="90" width="1" height="4" fill="#000"/><rect x="1029" y="92" width="1" height="2" fill="#000"/><rect x="1035" y="92" width="1" height="2" fill="#000"/><rect x="1042" y="92" width="1" height="2" fill="#000"/><rect x="1048" y="92" width="1" height="2" fill="#000"/><rect x="1054" y="88" width="1" height="6" fill="#000"/><rect x="1060" y="92" width="1" height="2" fill="#000"/><rect x="1066" y="92" width="1" height="2" fill="#000"/></svg>
<span class="t" style="left:289.7px;top:77.300px;width:40px;text-align:center;font-size:10.500px;letter-spacing:-0.150px;"><span style="display:inline-block;letter-spacing:1.600px;transform:scaleX(1.45);transform-origin:0 50%">-</span>800</span>
<span class="t" style="left:351.7px;top:77.300px;width:40px;text-align:center;font-size:10.500px;letter-spacing:-0.150px;"><span style="display:inline-block;letter-spacing:1.600px;transform:scaleX(1.45);transform-origin:0 50%">-</span>600</span>
<span class="t" style="left:413.7px;top:77.300px;width:40px;text-align:center;font-size:10.500px;letter-spacing:-0.150px;"><span style="display:inline-block;letter-spacing:1.600px;transform:scaleX(1.45);transform-origin:0 50%">-</span>400</span>
<span class="t" style="left:475.7px;top:77.300px;width:40px;text-align:center;font-size:10.500px;letter-spacing:-0.150px;"><span style="display:inline-block;letter-spacing:1.600px;transform:scaleX(1.45);transform-origin:0 50%">-</span>200</span>
<span class="t" style="left:537.7px;top:77.300px;width:40px;text-align:center;font-size:10.500px;letter-spacing:-0.150px;">0</span>
<span class="t" style="left:599.7px;top:77.300px;width:40px;text-align:center;font-size:10.500px;letter-spacing:-0.150px;">200</span>
<span class="t" style="left:661.7px;top:77.300px;width:40px;text-align:center;font-size:10.500px;letter-spacing:-0.150px;">400</span>
<span class="t" style="left:723.7px;top:77.300px;width:40px;text-align:center;font-size:10.500px;letter-spacing:-0.150px;">600</span>
<span class="t" style="left:785.7px;top:77.300px;width:40px;text-align:center;font-size:10.500px;letter-spacing:-0.150px;">800</span>
<span class="t" style="left:847.7px;top:77.300px;width:40px;text-align:center;font-size:10.500px;letter-spacing:-0.150px;">1000</span>
<span class="t" style="left:909.7px;top:77.300px;width:40px;text-align:center;font-size:10.500px;letter-spacing:-0.150px;">1200</span>
<span class="t" style="left:971.7px;top:77.300px;width:40px;text-align:center;font-size:10.500px;letter-spacing:-0.150px;">1400</span>
<span class="t" style="left:1026.93px;top:78px;font-size:10px;color:#000;transform:scaleX(0.8723);transform-origin:0 0;">millimetres</span>
<svg style="left:0px;top:0px;" width="1366" height="768" viewBox="0 0 1366 768"><rect x="295" y="681" width="2" height="1" fill="#000"/><rect x="295" y="675" width="2" height="1" fill="#000"/><rect x="295" y="668" width="2" height="1" fill="#000"/><rect x="295" y="662" width="2" height="1" fill="#000"/><rect x="291" y="656" width="6" height="1" fill="#000"/><rect x="295" y="650" width="2" height="1" fill="#000"/><rect x="295" y="644" width="2" height="1" fill="#000"/><rect x="295" y="637" width="2" height="1" fill="#000"/><rect x="295" y="631" width="2" height="1" fill="#000"/><rect x="293" y="625" width="4" height="1" fill="#000"/><rect x="295" y="619" width="2" height="1" fill="#000"/><rect x="295" y="613" width="2" height="1" fill="#000"/><rect x="295" y="606" width="2" height="1" fill="#000"/><rect x="295" y="600" width="2" height="1" fill="#000"/><rect x="291" y="594" width="6" height="1" fill="#000"/><rect x="295" y="588" width="2" height="1" fill="#000"/><rect x="295" y="582" width="2" height="1" fill="#000"/><rect x="295" y="575" width="2" height="1" fill="#000"/><rect x="295" y="569" width="2" height="1" fill="#000"/><rect x="293" y="563" width="4" height="1" fill="#000"/><rect x="295" y="557" width="2" height="1" fill="#000"/><rect x="295" y="551" width="2" height="1" fill="#000"/><rect x="295" y="544" width="2" height="1" fill="#000"/><rect x="295" y="538" width="2" height="1" fill="#000"/><rect x="291" y="532" width="6" height="1" fill="#000"/><rect x="295" y="526" width="2" height="1" fill="#000"/><rect x="295" y="520" width="2" height="1" fill="#000"/><rect x="295" y="513" width="2" height="1" fill="#000"/><rect x="295" y="507" width="2" height="1" fill="#000"/><rect x="293" y="501" width="4" height="1" fill="#000"/><rect x="295" y="495" width="2" height="1" fill="#000"/><rect x="295" y="489" width="2" height="1" fill="#000"/><rect x="295" y="482" width="2" height="1" fill="#000"/><rect x="295" y="476" width="2" height="1" fill="#000"/><rect x="291" y="470" width="6" height="1" fill="#000"/><rect x="295" y="464" width="2" height="1" fill="#000"/><rect x="295" y="458" width="2" height="1" fill="#000"/><rect x="295" y="451" width="2" height="1" fill="#000"/><rect x="295" y="445" width="2" height="1" fill="#000"/><rect x="293" y="439" width="4" height="1" fill="#000"/><rect x="295" y="433" width="2" height="1" fill="#000"/><rect x="295" y="427" width="2" height="1" fill="#000"/><rect x="295" y="420" width="2" height="1" fill="#000"/><rect x="295" y="414" width="2" height="1" fill="#000"/><rect x="291" y="408" width="6" height="1" fill="#000"/><rect x="295" y="402" width="2" height="1" fill="#000"/><rect x="295" y="396" width="2" height="1" fill="#000"/><rect x="295" y="389" width="2" height="1" fill="#000"/><rect x="295" y="383" width="2" height="1" fill="#000"/><rect x="293" y="377" width="4" height="1" fill="#000"/><rect x="295" y="371" width="2" height="1" fill="#000"/><rect x="295" y="365" width="2" height="1" fill="#000"/><rect x="295" y="358" width="2" height="1" fill="#000"/><rect x="295" y="352" width="2" height="1" fill="#000"/><rect x="291" y="346" width="6" height="1" fill="#000"/><rect x="295" y="340" width="2" height="1" fill="#000"/><rect x="295" y="334" width="2" height="1" fill="#000"/><rect x="295" y="327" width="2" height="1" fill="#000"/><rect x="295" y="321" width="2" height="1" fill="#000"/><rect x="293" y="315" width="4" height="1" fill="#000"/><rect x="295" y="309" width="2" height="1" fill="#000"/><rect x="295" y="303" width="2" height="1" fill="#000"/><rect x="295" y="296" width="2" height="1" fill="#000"/><rect x="295" y="290" width="2" height="1" fill="#000"/><rect x="291" y="284" width="6" height="1" fill="#000"/><rect x="295" y="278" width="2" height="1" fill="#000"/><rect x="295" y="272" width="2" height="1" fill="#000"/><rect x="295" y="265" width="2" height="1" fill="#000"/><rect x="295" y="259" width="2" height="1" fill="#000"/><rect x="293" y="253" width="4" height="1" fill="#000"/><rect x="295" y="247" width="2" height="1" fill="#000"/><rect x="295" y="241" width="2" height="1" fill="#000"/><rect x="295" y="234" width="2" height="1" fill="#000"/><rect x="295" y="228" width="2" height="1" fill="#000"/><rect x="291" y="222" width="6" height="1" fill="#000"/><rect x="295" y="216" width="2" height="1" fill="#000"/><rect x="295" y="210" width="2" height="1" fill="#000"/><rect x="295" y="203" width="2" height="1" fill="#000"/><rect x="295" y="197" width="2" height="1" fill="#000"/><rect x="293" y="191" width="4" height="1" fill="#000"/><rect x="295" y="185" width="2" height="1" fill="#000"/><rect x="295" y="179" width="2" height="1" fill="#000"/><rect x="295" y="172" width="2" height="1" fill="#000"/><rect x="295" y="166" width="2" height="1" fill="#000"/><rect x="291" y="160" width="6" height="1" fill="#000"/><rect x="295" y="154" width="2" height="1" fill="#000"/><rect x="295" y="148" width="2" height="1" fill="#000"/><rect x="295" y="141" width="2" height="1" fill="#000"/><rect x="295" y="135" width="2" height="1" fill="#000"/><rect x="293" y="129" width="4" height="1" fill="#000"/><rect x="295" y="123" width="2" height="1" fill="#000"/><rect x="295" y="117" width="2" height="1" fill="#000"/><rect x="295" y="110" width="2" height="1" fill="#000"/><rect x="295" y="104" width="2" height="1" fill="#000"/><rect x="291" y="98" width="6" height="1" fill="#000"/></svg>
<span class="t" style="left:265.2px;top:650.7px;width:40px;text-align:center;font-size:10.5px;transform:rotate(-90deg);">0</span>
<span class="t" style="left:265.2px;top:588.7px;width:40px;text-align:center;font-size:10.5px;transform:rotate(-90deg);">200</span>
<span class="t" style="left:265.2px;top:526.7px;width:40px;text-align:center;font-size:10.5px;transform:rotate(-90deg);">400</span>
<span class="t" style="left:265.2px;top:464.7px;width:40px;text-align:center;font-size:10.5px;transform:rotate(-90deg);">600</span>
<span class="t" style="left:265.2px;top:402.7px;width:40px;text-align:center;font-size:10.5px;transform:rotate(-90deg);">800</span>
<span class="t" style="left:265.2px;top:340.7px;width:40px;text-align:center;font-size:10.5px;transform:rotate(-90deg);">1000</span>
<span class="t" style="left:265.2px;top:278.7px;width:40px;text-align:center;font-size:10.5px;transform:rotate(-90deg);">1200</span>
<span class="t" style="left:265.2px;top:216.7px;width:40px;text-align:center;font-size:10.5px;transform:rotate(-90deg);">1400</span>
<span class="t" style="left:265.2px;top:154.7px;width:40px;text-align:center;font-size:10.5px;transform:rotate(-90deg);">1600</span>
<div style="left:277px;top:684px;width:21px;height:18px;background:#f2f2f2;border:1px solid #a0a0a0;border-bottom:2px solid #808080;border-right-color:#808080;box-sizing:border-box;"></div>
<div style="left:1070px;top:74px;width:18px;height:21px;background:#f6f6f6;border:1px solid #a0a0a0;border-right-color:#686868;border-bottom:2px solid #686868;box-sizing:border-box;"></div>
<div style="left:1072px;top:112px;width:15px;height:556px;background:#cdcdcd;"></div>
<div style="left:315px;top:686px;width:739px;height:15px;background:#cdcdcd;"></div>
<svg style="left:1072px;top:96px;" width="16" height="16" viewBox="0 0 16 16"><path d="M4 10L7.5 6.500L11 10" stroke="#565656" stroke-width="2.200" fill="none"/></svg>
<svg style="left:1072px;top:669px;" width="16" height="16" viewBox="0 0 16 16"><path d="M4 6L7.5 9.500L11 6" stroke="#565656" stroke-width="2.200" fill="none"/></svg>
<svg style="left:298px;top:686px;" width="16" height="16" viewBox="0 0 16 16"><path d="M10 4L6.500 7.500L10 11" stroke="#565656" stroke-width="2.200" fill="none"/></svg>
<svg style="left:1055px;top:686px;" width="16" height="16" viewBox="0 0 16 16"><path d="M6 4L9.500 7.500L6 11" stroke="#565656" stroke-width="2.200" fill="none"/></svg>
<svg style="left:0px;top:0px;" width="1366" height="768" viewBox="0 0 1366 768"><text x="284.500" y="62.600" font-size="14.500" font-weight="bold" font-family="Liberation Sans,sans-serif" fill="#000" textLength="15.500" lengthAdjust="spacingAndGlyphs">3D</text><path d="M320.0 63.0l2 1.300" stroke="#c8a06c" stroke-width="4" stroke-linecap="round"/><circle cx="314.5" cy="57.2" r="6.300" fill="#d4ecf8" stroke="#74869c" stroke-width="1.500"/><path d="M310.500 57.200h8M314.500 53.200v8" stroke="#3c5c78" stroke-width="1.500"/><path d="M343.3 63.0l2 1.300" stroke="#c8a06c" stroke-width="4" stroke-linecap="round"/><circle cx="337.8" cy="57.2" r="6.300" fill="#d4ecf8" stroke="#74869c" stroke-width="1.500"/><path d="M333.800 57.200h8" stroke="#3c5c78" stroke-width="1.500"/><path d="M366.1 63.0l2 1.300" stroke="#c8a06c" stroke-width="4" stroke-linecap="round"/><circle cx="360.6" cy="57.2" r="6.300" fill="#d4ecf8" stroke="#74869c" stroke-width="1.500"/><path d="M357.500 56.500q2.500 -3.500 6 -1q2 3 -1.500 5.500" fill="none" stroke="#98a428" stroke-width="1.600"/><path d="M356 53.500l0.500 4.500l4 -1.500z" fill="#98a428"/><rect x="377" y="50" width="1" height="18" fill="#a8a8a8"/><path d="M396.9 63.0l2 1.300" stroke="#c8a06c" stroke-width="4" stroke-linecap="round"/><circle cx="391.4" cy="57.2" r="6.300" fill="#d4ecf8" stroke="#74869c" stroke-width="1.500"/><text x="386.300" y="60" font-size="7" font-weight="bold" font-family="Liberation Sans,sans-serif" fill="#5c7c94" textLength="10.200" lengthAdjust="spacingAndGlyphs">1:1</text><path d="M420.2 63.0l2 1.300" stroke="#c8a06c" stroke-width="4" stroke-linecap="round"/><circle cx="414.7" cy="57.2" r="6.300" fill="#d4ecf8" stroke="#74869c" stroke-width="1.500"/><rect x="411.200" y="54.200" width="7" height="6" fill="#e8f4fc" stroke="#5c7890" stroke-width="1.300"/><path d="M433 52q4 -2 9 -0.500q3 1.500 2.500 5l2.500 3.500l0 4l-4 0.500l-3 -2q-5 1.500 -8 -1q-2.500 -3 -1 -7z" fill="#8c8c8c"/><rect x="454" y="50" width="1" height="18" fill="#a8a8a8"/><rect x="459" y="48" width="23" height="21" fill="#f8f8f8"/><rect x="482" y="48" width="22" height="21" fill="#f8f8f8"/><path d="M459.500 69v-20.500h44.500M482.500 48.500v20.500" fill="none" stroke="#909090" stroke-width="1"/><path d="M466 53.500h5M466 56.500h4M466 59.500h4M466 62.500h5M466 65.500h6" stroke="#202020" stroke-width="1" stroke-dasharray="2 1"/><path d="M479.500 57v5h-5v3l-5.500 -5.500l5.500 -5.500v3z" fill="#8c8c8c" stroke="#101010" stroke-width="1.200"/><path d="M496 53.500h5M497 56.500h4M497 59.500h4M496 62.500h5M495 65.500h6" stroke="#202020" stroke-width="1" stroke-dasharray="2 1"/><path d="M501.500 52v14" stroke="#606060" stroke-width="1"/><path d="M487.500 57v5h5v3l5.500 -5.500l-5.500 -5.500v3z" fill="#8c8c8c" stroke="#101010" stroke-width="1.200"/><path d="M519 60l5 4" stroke="#d8b48c" stroke-width="2.500" stroke-linecap="round"/><path d="M508.500 58.500l9.500 -5.500l3 2l0 7l-3 1.500z" fill="#6c6cb4"/><circle cx="517.500" cy="57" r="3.800" fill="#b8c8f0" stroke="#8490d0" stroke-width="1"/><rect x="531" y="50" width="1" height="18" fill="#a8a8a8"/><rect x="544" y="58" width="73" height="2" fill="#6c6c6c"/><rect x="544" y="60" width="73" height="1" fill="#fff"/><path d="M617.500 50.500h10v15l-4 4h-6z" fill="#f0f0f0" stroke="#f8f8f8" stroke-width="1"/><path d="M627.500 50v15.500l-4.500 4" fill="none" stroke="#484848" stroke-width="1.300"/></svg>
<svg style="left:0px;top:0px;" width="1366" height="768" viewBox="0 0 1366 768"><path d="M281 84.500h12M287.500 78v13" stroke="#b0b0b0" stroke-width="1" stroke-dasharray="1.500 1.200" fill="none"/><path d="M1075 81.500h8" stroke="#000" stroke-width="1.500" stroke-dasharray="3 1.500"/><path d="M1075 84.500h8.500l-4.250 4.500z" fill="#000"/><path d="M284.500 688v9" stroke="#000" stroke-width="1.500" stroke-dasharray="3 2"/><path d="M287.500 688.500l5 4.250l-5 4.250z" fill="#000"/><path d="M1060.500 77v8M1057.500 82.500h6M1061.500 86v6" stroke="#000" stroke-width="1" fill="none"/></svg>
<svg style="left:0;top:0" width="1366" height="768" viewBox="0 0 1366 768"><defs><linearGradient id="sg" x1="0" y1="0" x2="0" y2="1"><stop offset="0" stop-color="#000"/><stop offset="0.07" stop-color="#0a0a0a"/><stop offset="0.12" stop-color="#3c3c3c"/><stop offset="0.30" stop-color="#383838"/><stop offset="0.365" stop-color="#2a2a2a"/><stop offset="0.39" stop-color="#909090"/><stop offset="0.42" stop-color="#f6f6f6"/><stop offset="0.70" stop-color="#f2f2f2"/><stop offset="0.80" stop-color="#cecece"/><stop offset="0.90" stop-color="#8c8c8c"/><stop offset="0.97" stop-color="#4a4a4a"/><stop offset="1" stop-color="#1c1c1c"/></linearGradient><pattern id="sp" x="0" y="166.9" width="200" height="12.43" patternUnits="userSpaceOnUse"><rect width="200" height="12.43" fill="url(#sg)"/></pattern><radialGradient id="cg" cx="0.45" cy="0.45" r="0.6"><stop offset="0" stop-color="#f4f4f4"/><stop offset="0.4" stop-color="#d8d8d8"/><stop offset="0.75" stop-color="#a0a0a0"/><stop offset="1" stop-color="#505050"/></radialGradient><filter id="emb" x="-20%" y="-20%" width="140%" height="140%" color-interpolation-filters="sRGB"><feGaussianBlur in="SourceAlpha" stdDeviation="1.2" result="b1"/><feOffset in="b1" dx="-0.4" dy="-0.1" result="o1"/><feColorMatrix in="o1" type="matrix" values="0 0 0 0.8 0.3  0 0 0 0.8 0.3  0 0 0 0.8 0.3  0 0 0 0 1" result="g1"/><feGaussianBlur in="SourceAlpha" stdDeviation="5" result="b2"/><feOffset in="b2" dx="-3" dy="-0.3" result="o2"/><feColorMatrix in="o2" type="matrix" values="0 0 0 0.88 0.10  0 0 0 0.88 0.10  0 0 0 0.88 0.10  0 0 0 0 1" result="g2"/><feBlend in="g1" in2="g2" mode="multiply" result="g"/><feComposite in="g" in2="SourceAlpha" operator="in"/></filter><filter id="hl" x="-30%" y="-30%" width="160%" height="160%"><feGaussianBlur stdDeviation="1.1"/></filter><filter id="emc" x="-20%" y="-20%" width="140%" height="140%" color-interpolation-filters="sRGB"><feGaussianBlur in="SourceAlpha" stdDeviation="2.4" result="b"/><feOffset in="b" dx="-0.5" dy="-0.5" result="o"/><feColorMatrix in="o" type="matrix" values="0 0 0 1.5 -0.54  0 0 0 1.5 -0.54  0 0 0 1.5 -0.52  0 0 0 0 1" result="g"/><feComposite in="g" in2="SourceAlpha" operator="in"/></filter><clipPath id="cl"><path d="M664.5 166.5C665.4 169.2 668.2 177.4 670.0 183.0C671.8 188.6 673.4 194.2 675.0 200.0C676.6 205.8 678.4 210.8 679.5 218.0C680.6 225.2 681.0 234.7 681.5 243.0C682.0 251.3 682.4 261.5 682.4 268.0C682.4 274.5 682.4 275.8 681.8 282.0C681.1 288.2 679.8 297.0 678.5 305.0C677.2 313.0 675.8 321.7 674.3 330.0C672.8 338.3 671.3 346.7 669.6 355.0C667.9 363.3 665.9 372.5 664.1 380.0C662.3 387.5 660.8 391.7 658.8 400.0C656.8 408.3 653.8 420.8 652.0 430.0C650.2 439.2 649.4 447.0 648.3 455.0C647.2 463.0 646.0 469.7 645.2 478.0C644.4 486.3 643.5 496.7 643.3 505.0C643.1 513.3 643.6 520.0 644.1 528.0C644.6 536.0 645.3 544.7 646.5 553.0C647.7 561.3 649.2 569.7 651.2 578.0C653.2 586.3 656.8 598.1 658.2 603.0C659.6 607.9 659.5 606.8 659.8 607.5L600 607.5L600 166.5Z"/></clipPath><clipPath id="cw"><path d="M668.5 166.5C669.4 169.2 672.2 177.4 674.0 183.0C675.8 188.6 677.4 194.2 679.0 200.0C680.6 205.8 682.4 210.8 683.5 218.0C684.6 225.2 685.0 234.7 685.5 243.0C686.0 251.3 686.4 261.5 686.4 268.0C686.4 274.5 686.4 275.8 685.8 282.0C685.1 288.2 683.8 297.0 682.5 305.0C681.2 313.0 679.8 321.7 678.3 330.0C676.8 338.3 675.3 346.7 673.6 355.0C671.9 363.3 669.9 372.5 668.1 380.0C666.3 387.5 664.8 391.7 662.8 400.0C660.8 408.3 657.8 420.8 656.0 430.0C654.2 439.2 653.4 447.0 652.3 455.0C651.2 463.0 650.0 469.7 649.2 478.0C648.4 486.3 647.5 496.7 647.3 505.0C647.1 513.3 647.6 520.0 648.1 528.0C648.6 536.0 649.3 544.7 650.5 553.0C651.7 561.3 653.2 569.7 655.2 578.0C657.2 586.3 660.8 598.1 662.2 603.0C663.6 607.9 663.5 606.8 663.8 607.5L594 607.5L594 166.5Z"/></clipPath></defs><rect x="557" y="122" width="250" height="535" fill="#000"/><rect x="558" y="123" width="248" height="533" fill="#ffff80"/><rect x="593" y="159" width="179" height="456" fill="#8a8a48"/><rect x="594" y="160" width="177" height="454" fill="#f3f3f3"/><rect x="600" y="166.5" width="165" height="441" fill="#8a8a48"/><rect x="600" y="167.2" width="164.500" height="440.300" fill="#ffff80"/><g clip-path="url(#cw)"><rect x="594" y="160" width="100" height="454" fill="#f3f3f3"/></g><path d="M668.5 166.5C669.4 169.2 672.2 177.4 674.0 183.0C675.8 188.6 677.4 194.2 679.0 200.0C680.6 205.8 682.4 210.8 683.5 218.0C684.6 225.2 685.0 234.7 685.5 243.0C686.0 251.3 686.4 261.5 686.4 268.0C686.4 274.5 686.4 275.8 685.8 282.0C685.1 288.2 683.8 297.0 682.5 305.0C681.2 313.0 679.8 321.7 678.3 330.0C676.8 338.3 675.3 346.7 673.6 355.0C671.9 363.3 669.9 372.5 668.1 380.0C666.3 387.5 664.8 391.7 662.8 400.0C660.8 408.3 657.8 420.8 656.0 430.0C654.2 439.2 653.4 447.0 652.3 455.0C651.2 463.0 650.0 469.7 649.2 478.0C648.4 486.3 647.5 496.7 647.3 505.0C647.1 513.3 647.6 520.0 648.1 528.0C648.6 536.0 649.3 544.7 650.5 553.0C651.7 561.3 653.2 569.7 655.2 578.0C657.2 586.3 660.8 598.1 662.2 603.0C663.6 607.9 663.5 606.8 663.8 607.5" fill="none" stroke="#1a1a10" stroke-width="1"/><g clip-path="url(#cl)"><rect x="600" y="166.5" width="100" height="441" fill="url(#sp)"/></g><path d="M701.5 295.2C703.0 296.5 704.7 297.6 706.0 299.1C707.3 300.6 708.2 302.4 709.3 304.3C710.4 306.2 711.5 308.5 712.5 310.8C713.5 313.1 714.4 315.6 715.2 318.0C716.0 320.4 716.6 322.9 717.1 325.2C717.6 327.5 718.0 329.2 718.4 331.7C718.8 334.2 719.1 336.7 719.4 340.0C719.7 343.3 720.3 347.8 720.4 351.3C720.5 354.8 720.0 357.6 719.7 361.0C719.4 364.4 718.9 367.5 718.4 371.5C717.9 375.5 717.2 380.6 716.5 385.0C715.8 389.4 714.8 393.8 714.0 398.0C713.2 402.2 712.4 405.1 711.5 410.0C710.6 414.9 709.6 420.8 708.7 427.6C707.9 434.4 707.0 443.2 706.4 451.0C705.8 458.8 705.2 467.7 705.2 474.5C705.2 481.3 705.8 487.2 706.5 492.0C707.2 496.8 707.7 497.6 709.3 503.4C710.9 509.2 713.9 520.0 716.3 526.9C718.6 533.8 721.5 539.6 723.4 544.5C725.3 549.4 726.1 552.3 727.5 556.2C721.0 556.2 714.6 556.2 708.1 556.2C706.2 552.3 704.4 549.4 702.3 544.5C700.1 539.6 697.6 533.8 695.2 526.9C692.9 520.0 689.9 511.5 688.2 503.4C686.6 495.2 685.7 485.8 685.3 478.0C684.9 470.2 685.1 464.3 685.9 456.9C686.7 449.5 688.5 439.5 690.0 433.4C691.5 427.2 693.4 424.2 694.6 420.0C695.9 415.8 696.5 412.2 697.5 408.0C698.5 403.8 699.6 398.8 700.3 395.0C701.0 391.2 701.4 387.4 701.5 385.0C701.6 382.6 701.1 382.9 700.8 380.6C700.5 378.4 700.0 374.6 699.5 371.5C699.0 368.4 698.5 365.1 697.6 362.3C696.7 359.5 695.6 357.1 694.3 354.5C693.0 351.9 691.3 349.2 689.8 346.7C688.3 344.2 686.7 342.0 685.2 339.6C686.9 340.7 688.5 341.3 690.4 342.8C692.2 344.3 694.6 346.5 696.3 348.7C698.0 350.9 699.5 353.3 700.8 355.8C702.1 358.3 703.1 361.1 704.1 363.6C705.1 366.2 706.0 368.6 706.9 371.1C707.3 370.4 707.6 370.9 708.0 368.9C708.4 366.9 708.9 362.5 709.3 359.0C709.7 355.5 710.0 351.7 710.3 348.0C710.6 344.3 711.1 340.2 711.2 337.0C711.4 333.8 711.2 331.6 711.0 329.0C710.8 326.4 710.4 323.9 710.0 321.2C709.6 318.6 709.1 315.8 708.6 313.4C708.1 311.0 707.5 309.1 706.7 307.0C706.0 304.9 705.0 303.0 704.1 301.0C703.2 299.0 702.4 297.1 701.5 295.2Z" fill="#fff" filter="url(#emb)"/><path d="M727.7 260.7C728.9 261.5 729.9 261.6 731.3 263.0C732.6 264.4 734.4 266.9 735.8 268.9C737.2 270.8 738.5 272.5 739.7 274.7C740.9 276.9 742.1 279.5 743.0 281.9C743.9 284.3 744.6 286.7 745.3 289.0C745.9 291.3 746.4 293.3 746.9 295.6C747.4 297.9 747.8 300.0 748.0 302.7C748.2 305.4 748.0 309.1 748.0 312.0C748.0 314.9 748.0 317.3 747.7 320.3C747.4 323.3 747.0 325.9 746.2 330.0C745.4 334.1 743.9 341.1 743.0 345.0C742.1 348.9 741.6 350.9 741.0 353.5C740.4 356.1 739.8 358.5 739.4 360.6C739.0 362.7 738.7 364.3 738.4 366.2C739.7 365.6 740.8 365.3 742.3 364.5C743.8 363.7 746.0 362.2 747.6 361.3C749.2 360.4 750.7 359.5 752.1 359.0C753.5 358.5 754.7 358.5 756.0 358.3C755.3 359.5 755.1 360.5 754.0 362.0C752.9 363.5 751.0 365.4 749.5 367.1C748.0 368.8 746.4 370.7 745.0 372.3C743.6 373.9 742.3 375.4 741.0 377.0C739.7 378.6 738.2 380.4 737.1 382.1C736.0 383.8 735.3 385.2 734.5 387.3C733.7 389.4 733.0 392.4 732.2 395.0C731.5 397.6 730.8 400.2 730.0 403.0C729.2 405.8 728.1 409.2 727.5 412.0C726.9 414.8 726.7 417.4 726.3 420.0C725.9 422.6 725.5 424.6 725.1 427.6C724.8 430.6 724.4 434.8 724.2 438.0C724.0 441.2 724.1 444.0 724.0 447.0C726.1 444.4 728.0 441.9 730.4 439.3C732.8 436.8 736.1 433.9 738.6 431.7C741.1 429.5 743.4 427.6 745.6 426.4C747.8 425.2 749.9 425.2 752.0 424.6C749.1 428.3 746.1 432.2 743.3 435.8C740.5 439.4 737.1 442.8 735.0 446.3C732.9 449.8 731.6 453.2 730.4 456.9C729.2 460.6 728.5 464.3 728.0 468.6C727.5 472.9 727.3 478.3 727.5 482.7C727.7 487.1 728.6 491.1 729.2 495.2C729.8 499.3 730.5 503.4 731.2 507.5C732.5 505.3 733.2 503.1 735.0 501.0C736.8 498.9 739.7 496.2 742.0 494.6C744.3 493.0 746.9 492.0 749.0 491.5C751.1 491.0 752.6 491.6 754.4 491.7C752.6 493.3 750.9 494.4 749.0 496.4C747.1 498.3 744.7 500.7 743.3 503.4C741.9 506.1 741.0 509.3 740.4 512.8C739.8 516.3 739.5 520.8 739.8 524.5C740.1 528.2 740.8 531.3 742.0 535.0C743.2 538.7 745.6 543.8 746.8 546.8C748.0 549.8 748.0 551.1 749.0 552.7C750.0 554.3 751.5 555.0 752.7 556.2C744.3 556.2 735.9 556.2 727.5 556.2C726.1 552.3 725.3 549.4 723.4 544.5C721.5 539.6 718.6 533.8 716.3 526.9C713.9 520.0 710.9 509.2 709.3 503.4C707.7 497.6 707.2 496.8 706.5 492.0C705.8 487.2 705.2 481.3 705.2 474.5C705.2 467.7 705.8 458.8 706.4 451.0C707.0 443.2 707.9 434.4 708.7 427.6C709.6 420.8 710.6 414.9 711.5 410.0C712.4 405.1 713.2 400.5 714.0 398.0C714.8 395.5 715.5 397.3 716.3 395.0C717.1 392.7 718.0 387.1 718.9 384.0C719.8 380.9 720.5 379.3 721.5 376.2C722.5 373.2 723.7 369.2 724.8 365.8C725.9 362.4 727.0 359.5 728.0 356.0C729.0 352.5 729.6 349.0 730.6 345.0C731.6 341.0 732.9 337.1 734.0 332.0C735.1 326.9 736.6 319.8 737.4 314.5C738.2 309.2 738.7 304.0 738.8 300.0C738.9 296.0 738.2 293.3 737.8 290.4C737.4 287.5 736.9 285.2 736.2 282.6C735.6 280.0 734.8 277.2 733.9 274.7C733.0 272.2 731.6 269.9 730.6 267.6C729.6 265.3 728.7 263.0 727.7 260.7Z" fill="#fff" filter="url(#emb)"/><clipPath id="cpl"><path d="M701.5 295.2C703.0 296.5 704.7 297.6 706.0 299.1C707.3 300.6 708.2 302.4 709.3 304.3C710.4 306.2 711.5 308.5 712.5 310.8C713.5 313.1 714.4 315.6 715.2 318.0C716.0 320.4 716.6 322.9 717.1 325.2C717.6 327.5 718.0 329.2 718.4 331.7C718.8 334.2 719.1 336.7 719.4 340.0C719.7 343.3 720.3 347.8 720.4 351.3C720.5 354.8 720.0 357.6 719.7 361.0C719.4 364.4 718.9 367.5 718.4 371.5C717.9 375.5 717.2 380.6 716.5 385.0C715.8 389.4 714.8 393.8 714.0 398.0C713.2 402.2 712.4 405.1 711.5 410.0C710.6 414.9 709.6 420.8 708.7 427.6C707.9 434.4 707.0 443.2 706.4 451.0C705.8 458.8 705.2 467.7 705.2 474.5C705.2 481.3 705.8 487.2 706.5 492.0C707.2 496.8 707.7 497.6 709.3 503.4C710.9 509.2 713.9 520.0 716.3 526.9C718.6 533.8 721.5 539.6 723.4 544.5C725.3 549.4 726.1 552.3 727.5 556.2C721.0 556.2 714.6 556.2 708.1 556.2C706.2 552.3 704.4 549.4 702.3 544.5C700.1 539.6 697.6 533.8 695.2 526.9C692.9 520.0 689.9 511.5 688.2 503.4C686.6 495.2 685.7 485.8 685.3 478.0C684.9 470.2 685.1 464.3 685.9 456.9C686.7 449.5 688.5 439.5 690.0 433.4C691.5 427.2 693.4 424.2 694.6 420.0C695.9 415.8 696.5 412.2 697.5 408.0C698.5 403.8 699.6 398.8 700.3 395.0C701.0 391.2 701.4 387.4 701.5 385.0C701.6 382.6 701.1 382.9 700.8 380.6C700.5 378.4 700.0 374.6 699.5 371.5C699.0 368.4 698.5 365.1 697.6 362.3C696.7 359.5 695.6 357.1 694.3 354.5C693.0 351.9 691.3 349.2 689.8 346.7C688.3 344.2 686.7 342.0 685.2 339.6C686.9 340.7 688.5 341.3 690.4 342.8C692.2 344.3 694.6 346.5 696.3 348.7C698.0 350.9 699.5 353.3 700.8 355.8C702.1 358.3 703.1 361.1 704.1 363.6C705.1 366.2 706.0 368.6 706.9 371.1C707.3 370.4 707.6 370.9 708.0 368.9C708.4 366.9 708.9 362.5 709.3 359.0C709.7 355.5 710.0 351.7 710.3 348.0C710.6 344.3 711.1 340.2 711.2 337.0C711.4 333.8 711.2 331.6 711.0 329.0C710.8 326.4 710.4 323.9 710.0 321.2C709.6 318.6 709.1 315.8 708.6 313.4C708.1 311.0 707.5 309.1 706.7 307.0C706.0 304.9 705.0 303.0 704.1 301.0C703.2 299.0 702.4 297.1 701.5 295.2Z"/></clipPath><clipPath id="cpr"><path d="M727.7 260.7C728.9 261.5 729.9 261.6 731.3 263.0C732.6 264.4 734.4 266.9 735.8 268.9C737.2 270.8 738.5 272.5 739.7 274.7C740.9 276.9 742.1 279.5 743.0 281.9C743.9 284.3 744.6 286.7 745.3 289.0C745.9 291.3 746.4 293.3 746.9 295.6C747.4 297.9 747.8 300.0 748.0 302.7C748.2 305.4 748.0 309.1 748.0 312.0C748.0 314.9 748.0 317.3 747.7 320.3C747.4 323.3 747.0 325.9 746.2 330.0C745.4 334.1 743.9 341.1 743.0 345.0C742.1 348.9 741.6 350.9 741.0 353.5C740.4 356.1 739.8 358.5 739.4 360.6C739.0 362.7 738.7 364.3 738.4 366.2C739.7 365.6 740.8 365.3 742.3 364.5C743.8 363.7 746.0 362.2 747.6 361.3C749.2 360.4 750.7 359.5 752.1 359.0C753.5 358.5 754.7 358.5 756.0 358.3C755.3 359.5 755.1 360.5 754.0 362.0C752.9 363.5 751.0 365.4 749.5 367.1C748.0 368.8 746.4 370.7 745.0 372.3C743.6 373.9 742.3 375.4 741.0 377.0C739.7 378.6 738.2 380.4 737.1 382.1C736.0 383.8 735.3 385.2 734.5 387.3C733.7 389.4 733.0 392.4 732.2 395.0C731.5 397.6 730.8 400.2 730.0 403.0C729.2 405.8 728.1 409.2 727.5 412.0C726.9 414.8 726.7 417.4 726.3 420.0C725.9 422.6 725.5 424.6 725.1 427.6C724.8 430.6 724.4 434.8 724.2 438.0C724.0 441.2 724.1 444.0 724.0 447.0C726.1 444.4 728.0 441.9 730.4 439.3C732.8 436.8 736.1 433.9 738.6 431.7C741.1 429.5 743.4 427.6 745.6 426.4C747.8 425.2 749.9 425.2 752.0 424.6C749.1 428.3 746.1 432.2 743.3 435.8C740.5 439.4 737.1 442.8 735.0 446.3C732.9 449.8 731.6 453.2 730.4 456.9C729.2 460.6 728.5 464.3 728.0 468.6C727.5 472.9 727.3 478.3 727.5 482.7C727.7 487.1 728.6 491.1 729.2 495.2C729.8 499.3 730.5 503.4 731.2 507.5C732.5 505.3 733.2 503.1 735.0 501.0C736.8 498.9 739.7 496.2 742.0 494.6C744.3 493.0 746.9 492.0 749.0 491.5C751.1 491.0 752.6 491.6 754.4 491.7C752.6 493.3 750.9 494.4 749.0 496.4C747.1 498.3 744.7 500.7 743.3 503.4C741.9 506.1 741.0 509.3 740.4 512.8C739.8 516.3 739.5 520.8 739.8 524.5C740.1 528.2 740.8 531.3 742.0 535.0C743.2 538.7 745.6 543.8 746.8 546.8C748.0 549.8 748.0 551.1 749.0 552.7C750.0 554.3 751.5 555.0 752.7 556.2C744.3 556.2 735.9 556.2 727.5 556.2C726.1 552.3 725.3 549.4 723.4 544.5C721.5 539.6 718.6 533.8 716.3 526.9C713.9 520.0 710.9 509.2 709.3 503.4C707.7 497.6 707.2 496.8 706.5 492.0C705.8 487.2 705.2 481.3 705.2 474.5C705.2 467.7 705.8 458.8 706.4 451.0C707.0 443.2 707.9 434.4 708.7 427.6C709.6 420.8 710.6 414.9 711.5 410.0C712.4 405.1 713.2 400.5 714.0 398.0C714.8 395.5 715.5 397.3 716.3 395.0C717.1 392.7 718.0 387.1 718.9 384.0C719.8 380.9 720.5 379.3 721.5 376.2C722.5 373.2 723.7 369.2 724.8 365.8C725.9 362.4 727.0 359.5 728.0 356.0C729.0 352.5 729.6 349.0 730.6 345.0C731.6 341.0 732.9 337.1 734.0 332.0C735.1 326.9 736.6 319.8 737.4 314.5C738.2 309.2 738.7 304.0 738.8 300.0C738.9 296.0 738.2 293.3 737.8 290.4C737.4 287.5 736.9 285.2 736.2 282.6C735.6 280.0 734.8 277.2 733.9 274.7C733.0 272.2 731.6 269.9 730.6 267.6C729.6 265.3 728.7 263.0 727.7 260.7Z"/></clipPath><g clip-path="url(#cpr)" filter="url(#hl)" fill="none" stroke="#e6e6e6" stroke-width="3.200" stroke-linecap="round" stroke-linejoin="round"><path d="M731 383L737 374L745 366.500L752 361.200L756 358.700"/><path d="M726 470L727.500 457L733 444.500L741 433.500L751.500 425.200"/><path d="M739 530L737.500 514L742 500.500L748 494.800L754 492"/><path d="M716 410L724 392L731 372L737 350L741 328L742.500 302L741.500 288L737.500 276L732 266L728 261.200"/></g><g clip-path="url(#cpl)" filter="url(#hl)" fill="none" stroke="#e6e6e6" stroke-width="3.200" stroke-linecap="round" stroke-linejoin="round"><path d="M706 410L711 390L714 370L715.500 350L715 332L713 318L709 307L704.500 299L702 296"/><path d="M702 395L703.500 377L701 364L696.500 354.500L690.500 346L686 340.300"/></g><path d="M701.5 295.2C703.0 296.5 704.7 297.6 706.0 299.1C707.3 300.6 708.2 302.4 709.3 304.3C710.4 306.2 711.5 308.5 712.5 310.8C713.5 313.1 714.4 315.6 715.2 318.0C716.0 320.4 716.6 322.9 717.1 325.2C717.6 327.5 718.0 329.2 718.4 331.7C718.8 334.2 719.1 336.7 719.4 340.0C719.7 343.3 720.3 347.8 720.4 351.3C720.5 354.8 720.0 357.6 719.7 361.0C719.4 364.4 718.9 367.5 718.4 371.5C717.9 375.5 717.2 380.6 716.5 385.0C715.8 389.4 714.8 393.8 714.0 398.0C713.2 402.2 712.4 405.1 711.5 410.0C710.6 414.9 709.6 420.8 708.7 427.6C707.9 434.4 707.0 443.2 706.4 451.0C705.8 458.8 705.2 467.7 705.2 474.5C705.2 481.3 705.8 487.2 706.5 492.0C707.2 496.8 707.7 497.6 709.3 503.4C710.9 509.2 713.9 520.0 716.3 526.9C718.6 533.8 721.5 539.6 723.4 544.5C725.3 549.4 726.1 552.3 727.5 556.2C721.0 556.2 714.6 556.2 708.1 556.2C706.2 552.3 704.4 549.4 702.3 544.5C700.1 539.6 697.6 533.8 695.2 526.9C692.9 520.0 689.9 511.5 688.2 503.4C686.6 495.2 685.7 485.8 685.3 478.0C684.9 470.2 685.1 464.3 685.9 456.9C686.7 449.5 688.5 439.5 690.0 433.4C691.5 427.2 693.4 424.2 694.6 420.0C695.9 415.8 696.5 412.2 697.5 408.0C698.5 403.8 699.6 398.8 700.3 395.0C701.0 391.2 701.4 387.4 701.5 385.0C701.6 382.6 701.1 382.9 700.8 380.6C700.5 378.4 700.0 374.6 699.5 371.5C699.0 368.4 698.5 365.1 697.6 362.3C696.7 359.5 695.6 357.1 694.3 354.5C693.0 351.9 691.3 349.2 689.8 346.7C688.3 344.2 686.7 342.0 685.2 339.6C686.9 340.7 688.5 341.3 690.4 342.8C692.2 344.3 694.6 346.5 696.3 348.7C698.0 350.9 699.5 353.3 700.8 355.8C702.1 358.3 703.1 361.1 704.1 363.6C705.1 366.2 706.0 368.6 706.9 371.1C707.3 370.4 707.6 370.9 708.0 368.9C708.4 366.9 708.9 362.5 709.3 359.0C709.7 355.5 710.0 351.7 710.3 348.0C710.6 344.3 711.1 340.2 711.2 337.0C711.4 333.8 711.2 331.6 711.0 329.0C710.8 326.4 710.4 323.9 710.0 321.2C709.6 318.6 709.1 315.8 708.6 313.4C708.1 311.0 707.5 309.1 706.7 307.0C706.0 304.9 705.0 303.0 704.1 301.0C703.2 299.0 702.4 297.1 701.5 295.2Z" fill="none" stroke="#111" stroke-width="0.9" stroke-linejoin="round"/><path d="M727.7 260.7C728.9 261.5 729.9 261.6 731.3 263.0C732.6 264.4 734.4 266.9 735.8 268.9C737.2 270.8 738.5 272.5 739.7 274.7C740.9 276.9 742.1 279.5 743.0 281.9C743.9 284.3 744.6 286.7 745.3 289.0C745.9 291.3 746.4 293.3 746.9 295.6C747.4 297.9 747.8 300.0 748.0 302.7C748.2 305.4 748.0 309.1 748.0 312.0C748.0 314.9 748.0 317.3 747.7 320.3C747.4 323.3 747.0 325.9 746.2 330.0C745.4 334.1 743.9 341.1 743.0 345.0C742.1 348.9 741.6 350.9 741.0 353.5C740.4 356.1 739.8 358.5 739.4 360.6C739.0 362.7 738.7 364.3 738.4 366.2C739.7 365.6 740.8 365.3 742.3 364.5C743.8 363.7 746.0 362.2 747.6 361.3C749.2 360.4 750.7 359.5 752.1 359.0C753.5 358.5 754.7 358.5 756.0 358.3C755.3 359.5 755.1 360.5 754.0 362.0C752.9 363.5 751.0 365.4 749.5 367.1C748.0 368.8 746.4 370.7 745.0 372.3C743.6 373.9 742.3 375.4 741.0 377.0C739.7 378.6 738.2 380.4 737.1 382.1C736.0 383.8 735.3 385.2 734.5 387.3C733.7 389.4 733.0 392.4 732.2 395.0C731.5 397.6 730.8 400.2 730.0 403.0C729.2 405.8 728.1 409.2 727.5 412.0C726.9 414.8 726.7 417.4 726.3 420.0C725.9 422.6 725.5 424.6 725.1 427.6C724.8 430.6 724.4 434.8 724.2 438.0C724.0 441.2 724.1 444.0 724.0 447.0C726.1 444.4 728.0 441.9 730.4 439.3C732.8 436.8 736.1 433.9 738.6 431.7C741.1 429.5 743.4 427.6 745.6 426.4C747.8 425.2 749.9 425.2 752.0 424.6C749.1 428.3 746.1 432.2 743.3 435.8C740.5 439.4 737.1 442.8 735.0 446.3C732.9 449.8 731.6 453.2 730.4 456.9C729.2 460.6 728.5 464.3 728.0 468.6C727.5 472.9 727.3 478.3 727.5 482.7C727.7 487.1 728.6 491.1 729.2 495.2C729.8 499.3 730.5 503.4 731.2 507.5C732.5 505.3 733.2 503.1 735.0 501.0C736.8 498.9 739.7 496.2 742.0 494.6C744.3 493.0 746.9 492.0 749.0 491.5C751.1 491.0 752.6 491.6 754.4 491.7C752.6 493.3 750.9 494.4 749.0 496.4C747.1 498.3 744.7 500.7 743.3 503.4C741.9 506.1 741.0 509.3 740.4 512.8C739.8 516.3 739.5 520.8 739.8 524.5C740.1 528.2 740.8 531.3 742.0 535.0C743.2 538.7 745.6 543.8 746.8 546.8C748.0 549.8 748.0 551.1 749.0 552.7C750.0 554.3 751.5 555.0 752.7 556.2C744.3 556.2 735.9 556.2 727.5 556.2C726.1 552.3 725.3 549.4 723.4 544.5C721.5 539.6 718.6 533.8 716.3 526.9C713.9 520.0 710.9 509.2 709.3 503.4C707.7 497.6 707.2 496.8 706.5 492.0C705.8 487.2 705.2 481.3 705.2 474.5C705.2 467.7 705.8 458.8 706.4 451.0C707.0 443.2 707.9 434.4 708.7 427.6C709.6 420.8 710.6 414.9 711.5 410.0C712.4 405.1 713.2 400.5 714.0 398.0C714.8 395.5 715.5 397.3 716.3 395.0C717.1 392.7 718.0 387.1 718.9 384.0C719.8 380.9 720.5 379.3 721.5 376.2C722.5 373.2 723.7 369.2 724.8 365.8C725.9 362.4 727.0 359.5 728.0 356.0C729.0 352.5 729.6 349.0 730.6 345.0C731.6 341.0 732.9 337.1 734.0 332.0C735.1 326.9 736.6 319.8 737.4 314.5C738.2 309.2 738.7 304.0 738.8 300.0C738.9 296.0 738.2 293.3 737.8 290.4C737.4 287.5 736.9 285.2 736.2 282.6C735.6 280.0 734.8 277.2 733.9 274.7C733.0 272.2 731.6 269.9 730.6 267.6C729.6 265.3 728.7 263.0 727.7 260.7Z" fill="none" stroke="#111" stroke-width="0.9" stroke-linejoin="round"/><circle cx="701.5" cy="266" r="10.8" fill="url(#cg)" stroke="#111" stroke-width="1.1"/><circle cx="718.5" cy="286.3" r="9.3" fill="url(#cg)" stroke="#111" stroke-width="1.1"/><circle cx="725" cy="304.4" r="6.6" fill="url(#cg)" stroke="#111" stroke-width="1.1"/><circle cx="726.5" cy="322.8" r="5.0" fill="url(#cg)" stroke="#111" stroke-width="1.1"/></svg>
<div style="left:277px;top:706px;width:811px;height:42px;background:#f0f0f0;border:1px solid #a0a0a0;border-right:none;border-bottom-color:#fff;box-sizing:border-box;"></div>
<svg style="left:0px;top:0px;" width="1366" height="768" viewBox="0 0 1366 768"><rect x="311.500" y="712.500" width="8" height="5.500" rx="2.500" fill="none" stroke="#000" stroke-width="1.100"/><rect x="314.500" y="715.500" width="8" height="5.500" rx="2.500" fill="none" stroke="#000" stroke-width="1.100"/></svg>
<div style="left:298px;top:723px;width:25px;height:20px;background:#000;"></div>
<div style="left:283px;top:711px;width:25px;height:20px;background:#fff;border:1px solid #000;box-sizing:border-box;box-shadow:1px 1px 0 #808080;"></div>
<div style="left:333px;top:712px;width:30px;height:30px;background:#ffffff;border:1px solid #000;box-sizing:border-box;box-shadow:1px 1px 0 #606060;"></div>
<div style="left:368px;top:712px;width:30px;height:30px;background:#000000;border:1px solid #000;box-sizing:border-box;box-shadow:1px 1px 0 #606060;"></div>
<div style="left:403px;top:712px;width:30px;height:30px;background:#00ffff;border:1px solid #000;box-sizing:border-box;box-shadow:1px 1px 0 #606060;"></div>
<div style="left:438px;top:712px;width:30px;height:30px;background:#3048d8;border:1px solid #000;box-sizing:border-box;box-shadow:1px 1px 0 #606060;"></div>
<div style="left:473px;top:712px;width:30px;height:30px;background:#58b850;border:1px solid #000;box-sizing:border-box;box-shadow:1px 1px 0 #606060;"></div>
<div style="left:508px;top:712px;width:30px;height:30px;background:#d81020;border:1px solid #000;box-sizing:border-box;box-shadow:1px 1px 0 #606060;"></div>
<div style="left:543px;top:712px;width:30px;height:30px;background:#a030e0;border:1px solid #000;box-sizing:border-box;box-shadow:1px 1px 0 #606060;"></div>
<div style="left:578px;top:712px;width:30px;height:30px;background:#ffff80;border:1px solid #000;box-sizing:border-box;box-shadow:1px 1px 0 #606060;"></div>
<div style="left:613px;top:712px;width:30px;height:30px;background:#b0a038;border:1px solid #000;box-sizing:border-box;box-shadow:1px 1px 0 #606060;"></div>
<div style="left:648px;top:712px;width:30px;height:30px;background:#ffc818;border:1px solid #000;box-sizing:border-box;box-shadow:1px 1px 0 #606060;"></div>
<div style="left:683px;top:712px;width:30px;height:30px;background:#000000;border:1px solid #000;box-sizing:border-box;box-shadow:1px 1px 0 #606060;"></div>
<div style="left:718px;top:712px;width:30px;height:30px;background:#000000;border:1px solid #000;box-sizing:border-box;box-shadow:1px 1px 0 #606060;"></div>
<div style="left:753px;top:712px;width:30px;height:30px;background:#000000;border:1px solid #000;box-sizing:border-box;box-shadow:1px 1px 0 #606060;"></div>
<div style="left:788px;top:712px;width:30px;height:30px;background:#000000;border:1px solid #000;box-sizing:border-box;box-shadow:1px 1px 0 #606060;"></div>
<div style="left:823px;top:712px;width:30px;height:30px;background:#000000;border:1px solid #000;box-sizing:border-box;box-shadow:1px 1px 0 #606060;"></div>
<div style="left:858px;top:712px;width:30px;height:30px;background:#000000;border:1px solid #000;box-sizing:border-box;box-shadow:1px 1px 0 #606060;"></div>
<div style="left:893px;top:712px;width:30px;height:30px;background:#000000;border:1px solid #000;box-sizing:border-box;box-shadow:1px 1px 0 #606060;"></div>
<div style="left:928px;top:712px;width:30px;height:30px;background:#000000;border:1px solid #000;box-sizing:border-box;box-shadow:1px 1px 0 #606060;"></div>
<div style="left:963px;top:712px;width:30px;height:30px;background:#000000;border:1px solid #000;box-sizing:border-box;box-shadow:1px 1px 0 #606060;"></div>
<div style="left:998px;top:712px;width:30px;height:30px;background:#000000;border:1px solid #000;box-sizing:border-box;box-shadow:1px 1px 0 #606060;"></div>
<div style="left:1033px;top:712px;width:30px;height:30px;background:#000000;border:1px solid #000;box-sizing:border-box;box-shadow:1px 1px 0 #606060;"></div>
<svg style="left:1072px;top:708px;" width="16" height="16" viewBox="0 0 16 16"><path d="M4 10L7.5 6.500L11 10" stroke="#565656" stroke-width="2.200" fill="none"/></svg>
<svg style="left:1072px;top:731px;" width="16" height="16" viewBox="0 0 16 16"><path d="M4 6L7.5 9.500L11 6" stroke="#565656" stroke-width="2.200" fill="none"/></svg>
<div style="left:1093px;top:44px;width:1px;height:703px;background:#a0a0a0;"></div>
<div style="left:1365px;top:44px;width:1px;height:677px;background:#b0b0b0;"></div>
<div style="left:1102px;top:45px;width:243px;height:15px;background:#2f5590;"></div>
<span class="t" style="left:1106.2px;top:47px;font-size:12px;color:#fff;font-weight:bold;letter-spacing:0.233px;">Vectors</span>
<div style="left:1327px;top:46px;width:12px;height:12px;background:#c4cedc;"></div>
<svg style="left:1327px;top:46px;" width="12" height="12" viewBox="0 0 12 12"><path d="M2.5 3h7L6 10z" fill="#404040"/></svg>
<div style="left:1102px;top:76px;width:243px;height:15px;background:#2f5590;"></div>
<span class="t" style="left:1105.7px;top:78px;font-size:12px;color:#fff;font-weight:bold;letter-spacing:0.1px;">Bitmaps</span>
<div style="left:1327px;top:77px;width:12px;height:12px;background:#c4cedc;"></div>
<svg style="left:1327px;top:77px;" width="12" height="12" viewBox="0 0 12 12"><path d="M2.5 3h7L6 10z" fill="#404040"/></svg>
<div style="left:1102px;top:107px;width:243px;height:15px;background:#2f5590;"></div>
<span class="t" style="left:1105.7px;top:109px;font-size:12px;color:#fff;font-weight:bold;letter-spacing:0.083px;">Reliefs</span>
<div style="left:1327px;top:108px;width:12px;height:12px;background:#c4cedc;"></div>
<svg style="left:1327px;top:108px;" width="12" height="12" viewBox="0 0 12 12"><path d="M2.5 3h7L6 10z" fill="#404040"/></svg>
<div style="left:1094px;top:721px;width:49px;height:26px;background:#f0f0f0;border-radius:0 0 6px 6px;"></div>
<div style="left:1143px;top:722px;width:48px;height:25px;background:#f4f4f4;border:1px solid #a8a8a8;border-top:none;border-radius:0 0 5px 5px;box-sizing:border-box;"></div>
<span class="t" style="left:1102.2px;top:727px;font-size:12px;color:#000;letter-spacing:-0.4px;">Layers</span>
<span class="t" style="left:1151.5px;top:728px;font-size:12px;color:#000;">Add In</span>
<div style="left:1143px;top:721px;width:223px;height:1px;background:#a8a8a8;"></div>
<div style="left:1090px;top:747px;width:276px;height:1px;background:#9a9a9a;"></div>
<div style="left:1023px;top:751px;width:66px;height:18px;background:#f0f0f0;border:1px solid #a8a8a8;border-right-color:#fff;border-bottom-color:#fff;box-sizing:border-box;"></div>
<div style="left:1092px;top:751px;width:66px;height:18px;background:#f0f0f0;border:1px solid #a8a8a8;border-right-color:#fff;border-bottom-color:#fff;box-sizing:border-box;"></div>
<div style="left:1161px;top:751px;width:60px;height:18px;background:#f0f0f0;border:1px solid #a8a8a8;border-right-color:#fff;border-bottom-color:#fff;box-sizing:border-box;"></div>
<div style="left:1224px;top:751px;width:70px;height:18px;background:#f0f0f0;border:1px solid #a8a8a8;border-right-color:#fff;border-bottom-color:#fff;box-sizing:border-box;"></div>
<div style="left:1297px;top:751px;width:73px;height:18px;background:#f0f0f0;border:1px solid #a8a8a8;border-right-color:#fff;border-bottom-color:#fff;box-sizing:border-box;"></div>
<span class="t" style="left:1025.5px;top:754px;font-size:12px;color:#000;letter-spacing:-0.65px;">X: 1617.889</span>
<span class="t" style="left:1094.4px;top:754px;font-size:12px;color:#000;letter-spacing:-0.589px;">Y: 204.366</span>
</body></html>
